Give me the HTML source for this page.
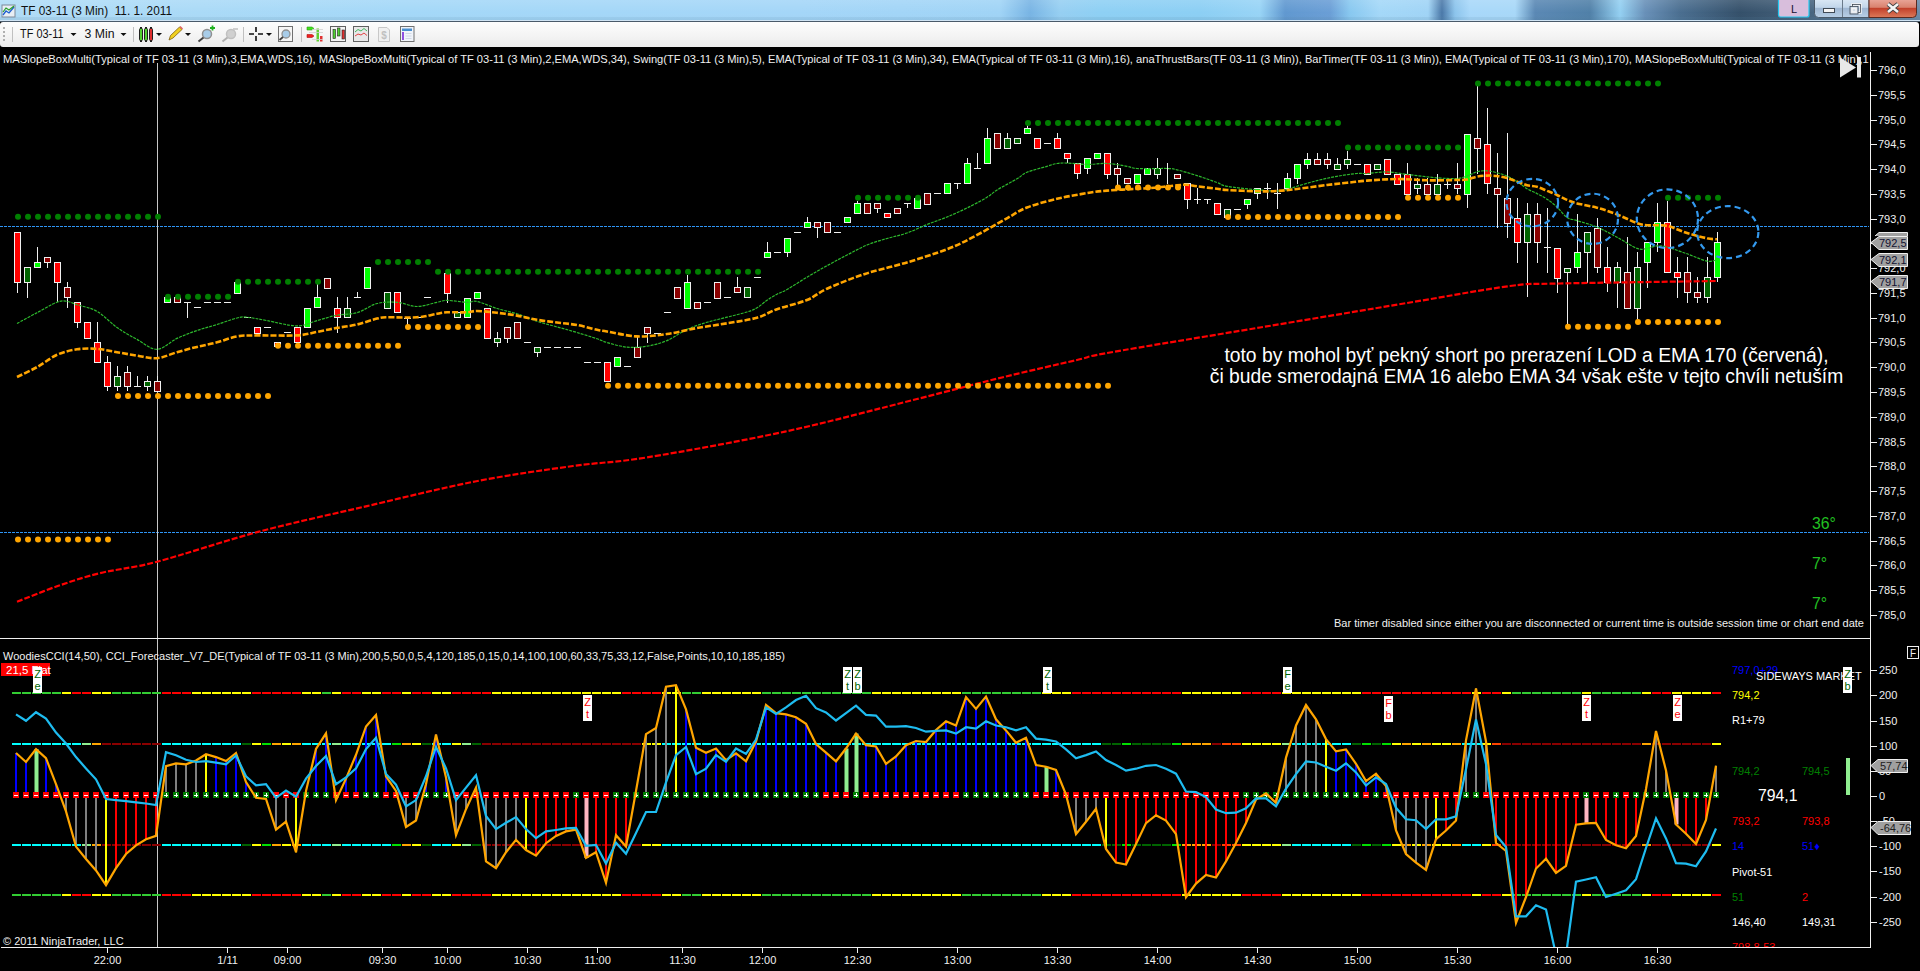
<!DOCTYPE html><html><head><meta charset="utf-8"><style>html,body{margin:0;padding:0;background:#000;width:1920px;height:971px;overflow:hidden}svg{display:block}text{font-family:"Liberation Sans",sans-serif}</style></head><body><svg width="1920" height="971" viewBox="0 0 1920 971"><defs><clipPath id="cp1"><rect x="0" y="47" width="1869" height="591"/></clipPath><clipPath id="cp2"><rect x="0" y="639" width="1869" height="308"/></clipPath><linearGradient id="tb" x1="0" y1="0" x2="1" y2="0"><stop offset="0.0000" stop-color="#b0dcf6"/><stop offset="0.2083" stop-color="#a4d8f8"/><stop offset="0.4167" stop-color="#a4d6f8"/><stop offset="0.5208" stop-color="#a0d4f6"/><stop offset="0.5365" stop-color="#78b4e4"/><stop offset="0.5521" stop-color="#96cff2"/><stop offset="0.5729" stop-color="#8ed0f4"/><stop offset="0.6250" stop-color="#8ccff4"/><stop offset="0.6562" stop-color="#98d4f6"/><stop offset="0.6693" stop-color="#6098d0"/><stop offset="0.6927" stop-color="#6a9ed6"/><stop offset="0.7031" stop-color="#88c8f0"/><stop offset="0.7188" stop-color="#a4d8f8"/><stop offset="0.7438" stop-color="#a0d4f6"/><stop offset="0.7510" stop-color="#4a78a8"/><stop offset="0.7578" stop-color="#8cc4ec"/><stop offset="0.7656" stop-color="#a8d8fa"/><stop offset="0.7891" stop-color="#a8d8f8"/><stop offset="0.7995" stop-color="#5a88b4"/><stop offset="0.8281" stop-color="#5080a8"/><stop offset="0.8438" stop-color="#94d0f2"/><stop offset="0.8568" stop-color="#6890b8"/><stop offset="0.8750" stop-color="#4a6e90"/><stop offset="0.9062" stop-color="#34506a"/><stop offset="0.9271" stop-color="#3e5a74"/><stop offset="1.0000" stop-color="#6a8aa8"/></linearGradient><linearGradient id="tbv" x1="0" y1="0" x2="0" y2="1"><stop offset="0" stop-color="#fff" stop-opacity="0.12"/><stop offset="0.6" stop-color="#fff" stop-opacity="0"/><stop offset="1" stop-color="#000" stop-opacity="0.04"/></linearGradient><linearGradient id="tool" x1="0" y1="0" x2="0" y2="1"><stop offset="0" stop-color="#fdfdfd"/><stop offset="1" stop-color="#ececec"/></linearGradient></defs><rect x="0" y="0" width="1920" height="971" fill="#000"/><rect x="0" y="0" width="1920" height="21" fill="url(#tb)"/><rect x="0" y="0" width="1920" height="21" fill="url(#tbv)"/><rect x="0" y="17" width="1920" height="3" fill="#5a8ab0" fill-opacity="0.12"/><rect x="0" y="20" width="1920" height="1" fill="#d0e4f4"/><rect x="0" y="21" width="1920" height="1" fill="#4a5a6a"/><rect x="0" y="22" width="1919" height="25" rx="3" fill="url(#tool)"/><g clip-path="url(#cp1)"><line x1="0" y1="226.5" x2="1869" y2="226.5" stroke="#2f95f5" stroke-width="1" stroke-dasharray="3,1"/><line x1="0" y1="532.5" x2="1869" y2="532.5" stroke="#2f95f5" stroke-width="1" stroke-dasharray="3,1"/><line x1="157.5" y1="63" x2="157.5" y2="947" stroke="#c8c8c8" stroke-width="1"/><g stroke="#f0f0f0" stroke-width="1"><line x1="17.5" y1="282" x2="17.5" y2="293"/><line x1="27.5" y1="282" x2="27.5" y2="298"/><line x1="37.5" y1="247" x2="37.5" y2="262"/><line x1="47.5" y1="262" x2="47.5" y2="268"/><line x1="57.5" y1="282" x2="57.5" y2="302"/><line x1="67.5" y1="282" x2="67.5" y2="287"/><line x1="67.5" y1="297" x2="67.5" y2="308"/><line x1="77.5" y1="322" x2="77.5" y2="328"/><line x1="97.5" y1="322" x2="97.5" y2="342"/><line x1="107.5" y1="356" x2="107.5" y2="362"/><line x1="107.5" y1="386" x2="107.5" y2="391"/><line x1="117.5" y1="366" x2="117.5" y2="376"/><line x1="117.5" y1="386" x2="117.5" y2="391"/><line x1="127.5" y1="366" x2="127.5" y2="372"/><line x1="127.5" y1="386" x2="127.5" y2="391"/><line x1="137.5" y1="376" x2="137.5" y2="386"/><line x1="134" y1="386.5" x2="141" y2="386.5"/><line x1="147.5" y1="376" x2="147.5" y2="381"/><line x1="147.5" y1="386" x2="147.5" y2="391"/><line x1="157.5" y1="376" x2="157.5" y2="381"/><line x1="187.5" y1="302" x2="187.5" y2="318"/><line x1="184" y1="302.5" x2="191" y2="302.5"/><line x1="194" y1="307.5" x2="201" y2="307.5"/><line x1="204" y1="302.5" x2="211" y2="302.5"/><line x1="214" y1="302.5" x2="221" y2="302.5"/><line x1="224" y1="302.5" x2="231" y2="302.5"/><line x1="244" y1="317.5" x2="251" y2="317.5"/><line x1="264" y1="327.5" x2="271" y2="327.5"/><line x1="284" y1="332.5" x2="291" y2="332.5"/><line x1="317.5" y1="284" x2="317.5" y2="297"/><line x1="337.5" y1="297" x2="337.5" y2="308"/><line x1="337.5" y1="317" x2="337.5" y2="333"/><line x1="347.5" y1="297" x2="347.5" y2="308"/><line x1="357.5" y1="292" x2="357.5" y2="297"/><line x1="354" y1="297.5" x2="361" y2="297.5"/><line x1="407.5" y1="318" x2="407.5" y2="327"/><line x1="404" y1="318.5" x2="411" y2="318.5"/><line x1="414" y1="317.5" x2="421" y2="317.5"/><line x1="424" y1="297.5" x2="431" y2="297.5"/><line x1="447.5" y1="293" x2="447.5" y2="303"/><line x1="497.5" y1="332" x2="497.5" y2="338"/><line x1="497.5" y1="342" x2="497.5" y2="347"/><line x1="507.5" y1="338" x2="507.5" y2="343"/><line x1="524" y1="342.5" x2="531" y2="342.5"/><line x1="537.5" y1="352" x2="537.5" y2="357"/><line x1="544" y1="347.5" x2="551" y2="347.5"/><line x1="554" y1="347.5" x2="561" y2="347.5"/><line x1="564" y1="347.5" x2="571" y2="347.5"/><line x1="574" y1="347.5" x2="581" y2="347.5"/><line x1="584" y1="362.5" x2="591" y2="362.5"/><line x1="594" y1="362.5" x2="601" y2="362.5"/><line x1="624" y1="366.5" x2="631" y2="366.5"/><line x1="637.5" y1="337" x2="637.5" y2="347"/><line x1="647.5" y1="333" x2="647.5" y2="343"/><line x1="654" y1="333.5" x2="661" y2="333.5"/><line x1="664" y1="312.5" x2="671" y2="312.5"/><line x1="687.5" y1="275" x2="687.5" y2="282"/><line x1="704" y1="302.5" x2="711" y2="302.5"/><line x1="724" y1="297.5" x2="731" y2="297.5"/><line x1="737.5" y1="277" x2="737.5" y2="287"/><line x1="754" y1="277.5" x2="761" y2="277.5"/><line x1="767.5" y1="242" x2="767.5" y2="252"/><line x1="774" y1="252.5" x2="781" y2="252.5"/><line x1="787.5" y1="252" x2="787.5" y2="257"/><line x1="794" y1="232.5" x2="801" y2="232.5"/><line x1="807.5" y1="217" x2="807.5" y2="222"/><line x1="817.5" y1="227" x2="817.5" y2="238"/><line x1="834" y1="232.5" x2="841" y2="232.5"/><line x1="857.5" y1="201" x2="857.5" y2="203"/><line x1="877.5" y1="208" x2="877.5" y2="213"/><line x1="907.5" y1="203" x2="907.5" y2="208"/><line x1="904" y1="203.5" x2="911" y2="203.5"/><line x1="934" y1="193.5" x2="941" y2="193.5"/><line x1="957.5" y1="183" x2="957.5" y2="189"/><line x1="954" y1="183.5" x2="961" y2="183.5"/><line x1="967.5" y1="158" x2="967.5" y2="163"/><line x1="977.5" y1="153" x2="977.5" y2="168"/><line x1="974" y1="168.5" x2="981" y2="168.5"/><line x1="987.5" y1="128" x2="987.5" y2="138"/><line x1="1007.5" y1="133" x2="1007.5" y2="138"/><line x1="1027.5" y1="123" x2="1027.5" y2="128"/><line x1="1044" y1="143.5" x2="1051" y2="143.5"/><line x1="1057.5" y1="133" x2="1057.5" y2="138"/><line x1="1067.5" y1="158" x2="1067.5" y2="163"/><line x1="1077.5" y1="173" x2="1077.5" y2="179"/><line x1="1087.5" y1="168" x2="1087.5" y2="174"/><line x1="1107.5" y1="174" x2="1107.5" y2="179"/><line x1="1117.5" y1="163" x2="1117.5" y2="168"/><line x1="1117.5" y1="174" x2="1117.5" y2="185"/><line x1="1157.5" y1="158" x2="1157.5" y2="168"/><line x1="1157.5" y1="174" x2="1157.5" y2="179"/><line x1="1167.5" y1="163" x2="1167.5" y2="168"/><line x1="1167.5" y1="168" x2="1167.5" y2="184"/><line x1="1164" y1="168.5" x2="1171" y2="168.5"/><line x1="1187.5" y1="199" x2="1187.5" y2="209"/><line x1="1197.5" y1="188" x2="1197.5" y2="199"/><line x1="1197.5" y1="199" x2="1197.5" y2="204"/><line x1="1194" y1="199.5" x2="1201" y2="199.5"/><line x1="1207.5" y1="199" x2="1207.5" y2="204"/><line x1="1204" y1="199.5" x2="1211" y2="199.5"/><line x1="1234" y1="209.5" x2="1241" y2="209.5"/><line x1="1247.5" y1="204" x2="1247.5" y2="209"/><line x1="1257.5" y1="193" x2="1257.5" y2="199"/><line x1="1267.5" y1="183" x2="1267.5" y2="188"/><line x1="1267.5" y1="188" x2="1267.5" y2="199"/><line x1="1264" y1="188.5" x2="1271" y2="188.5"/><line x1="1277.5" y1="183" x2="1277.5" y2="193"/><line x1="1277.5" y1="193" x2="1277.5" y2="209"/><line x1="1274" y1="193.5" x2="1281" y2="193.5"/><line x1="1287.5" y1="173" x2="1287.5" y2="178"/><line x1="1297.5" y1="178" x2="1297.5" y2="184"/><line x1="1307.5" y1="153" x2="1307.5" y2="159"/><line x1="1307.5" y1="164" x2="1307.5" y2="169"/><line x1="1317.5" y1="153" x2="1317.5" y2="159"/><line x1="1327.5" y1="153" x2="1327.5" y2="159"/><line x1="1327.5" y1="164" x2="1327.5" y2="169"/><line x1="1337.5" y1="158" x2="1337.5" y2="164"/><line x1="1347.5" y1="151" x2="1347.5" y2="159"/><line x1="1347.5" y1="164" x2="1347.5" y2="169"/><line x1="1354" y1="164.5" x2="1361" y2="164.5"/><line x1="1407.5" y1="163" x2="1407.5" y2="174"/><line x1="1417.5" y1="178" x2="1417.5" y2="184"/><line x1="1417.5" y1="188" x2="1417.5" y2="194"/><line x1="1427.5" y1="178" x2="1427.5" y2="184"/><line x1="1437.5" y1="174" x2="1437.5" y2="184"/><line x1="1447.5" y1="178" x2="1447.5" y2="184"/><line x1="1447.5" y1="184" x2="1447.5" y2="189"/><line x1="1444" y1="184.5" x2="1451" y2="184.5"/><line x1="1457.5" y1="163" x2="1457.5" y2="184"/><line x1="1457.5" y1="188" x2="1457.5" y2="194"/><line x1="1467.5" y1="194" x2="1467.5" y2="208"/><line x1="1477.5" y1="84" x2="1477.5" y2="138"/><line x1="1477.5" y1="148" x2="1477.5" y2="174"/><line x1="1487.5" y1="108" x2="1487.5" y2="144"/><line x1="1487.5" y1="183" x2="1487.5" y2="194"/><line x1="1497.5" y1="153" x2="1497.5" y2="188"/><line x1="1497.5" y1="194" x2="1497.5" y2="228"/><line x1="1507.5" y1="133" x2="1507.5" y2="198"/><line x1="1507.5" y1="223" x2="1507.5" y2="238"/><line x1="1517.5" y1="198" x2="1517.5" y2="218"/><line x1="1517.5" y1="242" x2="1517.5" y2="263"/><line x1="1527.5" y1="203" x2="1527.5" y2="214"/><line x1="1527.5" y1="242" x2="1527.5" y2="297"/><line x1="1537.5" y1="203" x2="1537.5" y2="214"/><line x1="1537.5" y1="242" x2="1537.5" y2="263"/><line x1="1547.5" y1="208" x2="1547.5" y2="247"/><line x1="1547.5" y1="247" x2="1547.5" y2="273"/><line x1="1544" y1="247.5" x2="1551" y2="247.5"/><line x1="1557.5" y1="278" x2="1557.5" y2="293"/><line x1="1567.5" y1="272" x2="1567.5" y2="324"/><line x1="1577.5" y1="214" x2="1577.5" y2="252"/><line x1="1577.5" y1="267" x2="1577.5" y2="273"/><line x1="1587.5" y1="252" x2="1587.5" y2="283"/><line x1="1597.5" y1="218" x2="1597.5" y2="228"/><line x1="1597.5" y1="267" x2="1597.5" y2="273"/><line x1="1607.5" y1="247" x2="1607.5" y2="267"/><line x1="1607.5" y1="282" x2="1607.5" y2="292"/><line x1="1617.5" y1="262" x2="1617.5" y2="267"/><line x1="1617.5" y1="282" x2="1617.5" y2="308"/><line x1="1627.5" y1="237" x2="1627.5" y2="272"/><line x1="1637.5" y1="252" x2="1637.5" y2="267"/><line x1="1637.5" y1="308" x2="1637.5" y2="319"/><line x1="1647.5" y1="262" x2="1647.5" y2="288"/><line x1="1657.5" y1="203" x2="1657.5" y2="222"/><line x1="1657.5" y1="242" x2="1657.5" y2="252"/><line x1="1667.5" y1="201" x2="1667.5" y2="222"/><line x1="1677.5" y1="257" x2="1677.5" y2="272"/><line x1="1677.5" y1="277" x2="1677.5" y2="298"/><line x1="1687.5" y1="257" x2="1687.5" y2="272"/><line x1="1687.5" y1="292" x2="1687.5" y2="303"/><line x1="1697.5" y1="277" x2="1697.5" y2="292"/><line x1="1697.5" y1="297" x2="1697.5" y2="303"/><line x1="1707.5" y1="257" x2="1707.5" y2="277"/><line x1="1707.5" y1="297" x2="1707.5" y2="303"/><line x1="1717.5" y1="232" x2="1717.5" y2="242"/><line x1="1717.5" y1="277" x2="1717.5" y2="282"/></g><g stroke="#f0f0f0" stroke-width="1"><rect x="14.5" y="232.5" width="6" height="50" fill="#ff0000"/><rect x="24.5" y="267.5" width="6" height="15" fill="#006400"/><rect x="34.5" y="262.5" width="6" height="5" fill="#00ff00"/><rect x="44.5" y="257.5" width="6" height="5" fill="#8b0000"/><rect x="54.5" y="262.5" width="6" height="20" fill="#ff0000"/><rect x="64.5" y="287.5" width="6" height="10" fill="#8b0000"/><rect x="74.5" y="302.5" width="6" height="20" fill="#ff0000"/><rect x="84.5" y="322.5" width="6" height="16" fill="#ff0000"/><rect x="94.5" y="342.5" width="6" height="20" fill="#ff0000"/><rect x="104.5" y="362.5" width="6" height="24" fill="#ff0000"/><rect x="114.5" y="376.5" width="6" height="10" fill="#006400"/><rect x="124.5" y="372.5" width="6" height="14" fill="#8b0000"/><rect x="144.5" y="381.5" width="6" height="5" fill="#006400"/><rect x="154.5" y="381.5" width="6" height="10" fill="#8b0000"/><rect x="164.5" y="297.5" width="6" height="5" fill="#00ff00"/><rect x="174.5" y="297.5" width="6" height="5" fill="#8b0000"/><rect x="234.5" y="282.5" width="6" height="11" fill="#00ff00"/><rect x="254.5" y="327.5" width="6" height="6" fill="#ff0000"/><rect x="274.5" y="342.5" width="6" height="4" fill="#ff0000"/><rect x="294.5" y="327.5" width="6" height="15" fill="#ff0000"/><rect x="304.5" y="308.5" width="6" height="19" fill="#00ff00"/><rect x="314.5" y="297.5" width="6" height="10" fill="#00ff00"/><rect x="324.5" y="278.5" width="6" height="10" fill="#8b0000"/><rect x="334.5" y="308.5" width="6" height="9" fill="#ff0000"/><rect x="344.5" y="308.5" width="6" height="9" fill="#006400"/><rect x="364.5" y="267.5" width="6" height="21" fill="#00ff00"/><rect x="384.5" y="292.5" width="6" height="16" fill="#006400"/><rect x="394.5" y="292.5" width="6" height="20" fill="#ff0000"/><rect x="444.5" y="273.5" width="6" height="20" fill="#ff0000"/><rect x="454.5" y="312.5" width="6" height="5" fill="#006400"/><rect x="464.5" y="298.5" width="6" height="19" fill="#00ff00"/><rect x="474.5" y="292.5" width="6" height="6" fill="#00ff00"/><rect x="484.5" y="308.5" width="6" height="30" fill="#ff0000"/><rect x="494.5" y="338.5" width="6" height="4" fill="#006400"/><rect x="504.5" y="327.5" width="6" height="11" fill="#8b0000"/><rect x="514.5" y="322.5" width="6" height="16" fill="#8b0000"/><rect x="534.5" y="347.5" width="6" height="5" fill="#006400"/><rect x="604.5" y="362.5" width="6" height="19" fill="#ff0000"/><rect x="614.5" y="357.5" width="6" height="9" fill="#00ff00"/><rect x="634.5" y="347.5" width="6" height="10" fill="#8b0000"/><rect x="644.5" y="327.5" width="6" height="6" fill="#8b0000"/><rect x="674.5" y="287.5" width="6" height="11" fill="#8b0000"/><rect x="684.5" y="282.5" width="6" height="26" fill="#00ff00"/><rect x="694.5" y="302.5" width="6" height="6" fill="#8b0000"/><rect x="714.5" y="282.5" width="6" height="16" fill="#8b0000"/><rect x="734.5" y="287.5" width="6" height="5" fill="#8b0000"/><rect x="744.5" y="287.5" width="6" height="10" fill="#006400"/><rect x="764.5" y="252.5" width="6" height="5" fill="#00ff00"/><rect x="784.5" y="238.5" width="6" height="14" fill="#00ff00"/><rect x="804.5" y="222.5" width="6" height="5" fill="#00ff00"/><rect x="814.5" y="222.5" width="6" height="5" fill="#8b0000"/><rect x="824.5" y="222.5" width="6" height="10" fill="#8b0000"/><rect x="844.5" y="217.5" width="6" height="5" fill="#00ff00"/><rect x="854.5" y="203.5" width="6" height="10" fill="#00ff00"/><rect x="864.5" y="203.5" width="6" height="10" fill="#8b0000"/><rect x="874.5" y="203.5" width="6" height="5" fill="#8b0000"/><rect x="884.5" y="213.5" width="6" height="4" fill="#ff0000"/><rect x="894.5" y="208.5" width="6" height="5" fill="#8b0000"/><rect x="914.5" y="198.5" width="6" height="10" fill="#00ff00"/><rect x="924.5" y="193.5" width="6" height="11" fill="#8b0000"/><rect x="944.5" y="183.5" width="6" height="10" fill="#00ff00"/><rect x="964.5" y="163.5" width="6" height="20" fill="#00ff00"/><rect x="984.5" y="138.5" width="6" height="25" fill="#00ff00"/><rect x="994.5" y="133.5" width="6" height="15" fill="#8b0000"/><rect x="1004.5" y="138.5" width="6" height="10" fill="#006400"/><rect x="1014.5" y="138.5" width="6" height="5" fill="#006400"/><rect x="1024.5" y="128.5" width="6" height="5" fill="#00ff00"/><rect x="1034.5" y="138.5" width="6" height="10" fill="#ff0000"/><rect x="1054.5" y="138.5" width="6" height="10" fill="#ff0000"/><rect x="1064.5" y="153.5" width="6" height="5" fill="#ff0000"/><rect x="1074.5" y="163.5" width="6" height="10" fill="#ff0000"/><rect x="1084.5" y="158.5" width="6" height="10" fill="#00ff00"/><rect x="1094.5" y="153.5" width="6" height="5" fill="#00ff00"/><rect x="1104.5" y="153.5" width="6" height="21" fill="#ff0000"/><rect x="1114.5" y="168.5" width="6" height="6" fill="#8b0000"/><rect x="1124.5" y="178.5" width="6" height="5" fill="#8b0000"/><rect x="1134.5" y="174.5" width="6" height="9" fill="#00ff00"/><rect x="1144.5" y="168.5" width="6" height="6" fill="#00ff00"/><rect x="1154.5" y="168.5" width="6" height="6" fill="#006400"/><rect x="1174.5" y="174.5" width="6" height="4" fill="#8b0000"/><rect x="1184.5" y="183.5" width="6" height="16" fill="#ff0000"/><rect x="1214.5" y="203.5" width="6" height="11" fill="#ff0000"/><rect x="1224.5" y="209.5" width="6" height="8" fill="#006400"/><rect x="1244.5" y="199.5" width="6" height="5" fill="#00ff00"/><rect x="1254.5" y="188.5" width="6" height="5" fill="#00ff00"/><rect x="1284.5" y="178.5" width="6" height="10" fill="#00ff00"/><rect x="1294.5" y="164.5" width="6" height="14" fill="#00ff00"/><rect x="1304.5" y="159.5" width="6" height="5" fill="#00ff00"/><rect x="1314.5" y="159.5" width="6" height="5" fill="#8b0000"/><rect x="1324.5" y="159.5" width="6" height="5" fill="#8b0000"/><rect x="1334.5" y="164.5" width="6" height="5" fill="#006400"/><rect x="1344.5" y="159.5" width="6" height="5" fill="#006400"/><rect x="1364.5" y="164.5" width="6" height="10" fill="#ff0000"/><rect x="1374.5" y="164.5" width="6" height="5" fill="#006400"/><rect x="1384.5" y="159.5" width="6" height="15" fill="#ff0000"/><rect x="1394.5" y="174.5" width="6" height="10" fill="#ff0000"/><rect x="1404.5" y="174.5" width="6" height="20" fill="#ff0000"/><rect x="1414.5" y="184.5" width="6" height="4" fill="#006400"/><rect x="1424.5" y="184.5" width="6" height="10" fill="#8b0000"/><rect x="1434.5" y="184.5" width="6" height="10" fill="#006400"/><rect x="1454.5" y="184.5" width="6" height="4" fill="#8b0000"/><rect x="1464.5" y="134.5" width="6" height="60" fill="#00ff00"/><rect x="1474.5" y="138.5" width="6" height="10" fill="#8b0000"/><rect x="1484.5" y="144.5" width="6" height="39" fill="#ff0000"/><rect x="1494.5" y="188.5" width="6" height="6" fill="#8b0000"/><rect x="1504.5" y="198.5" width="6" height="25" fill="#8b0000"/><rect x="1514.5" y="218.5" width="6" height="24" fill="#ff0000"/><rect x="1524.5" y="214.5" width="6" height="28" fill="#006400"/><rect x="1534.5" y="214.5" width="6" height="28" fill="#8b0000"/><rect x="1554.5" y="248.5" width="6" height="30" fill="#ff0000"/><rect x="1564.5" y="268.5" width="6" height="4" fill="#006400"/><rect x="1574.5" y="252.5" width="6" height="15" fill="#00ff00"/><rect x="1584.5" y="232.5" width="6" height="20" fill="#006400"/><rect x="1594.5" y="228.5" width="6" height="39" fill="#8b0000"/><rect x="1604.5" y="267.5" width="6" height="15" fill="#ff0000"/><rect x="1614.5" y="267.5" width="6" height="15" fill="#006400"/><rect x="1624.5" y="272.5" width="6" height="36" fill="#8b0000"/><rect x="1634.5" y="267.5" width="6" height="41" fill="#006400"/><rect x="1644.5" y="242.5" width="6" height="20" fill="#00ff00"/><rect x="1654.5" y="222.5" width="6" height="20" fill="#00ff00"/><rect x="1664.5" y="222.5" width="6" height="50" fill="#ff0000"/><rect x="1674.5" y="272.5" width="6" height="5" fill="#ff0000"/><rect x="1684.5" y="272.5" width="6" height="20" fill="#8b0000"/><rect x="1694.5" y="292.5" width="6" height="5" fill="#8b0000"/><rect x="1704.5" y="277.5" width="6" height="20" fill="#006400"/><rect x="1714.5" y="242.5" width="6" height="35" fill="#00ff00"/></g><path d="M17 601.8C23.7 599.2 43.2 591.1 57 586.3C70.8 581.5 83.3 577.2 100 573.1C116.7 569 130.7 568.6 157 561.7C183.3 554.8 223 541.2 258 531.9C293 522.6 330.8 514.5 367 506.1C403.2 497.7 440.7 488.2 475 481.5C509.3 474.8 544.3 470 573 466C601.7 462 611.7 463.1 647 457.4C682.3 451.7 740 441.3 785 431.6C830 421.9 880.7 408.1 917 399C953.3 389.9 976.3 383.7 1003 377.2C1029.7 370.7 1059.2 364.1 1077 360C1094.8 355.9 1079.5 357.9 1110 352.5C1140.5 347.1 1210 335.8 1260 327.5C1310 319.2 1368.3 309.4 1410 302.5C1451.7 295.6 1485 289.2 1510 286C1535 282.8 1525.5 284.3 1560 283.5C1594.5 282.7 1690.8 281.4 1717 281" fill="none" stroke="#ff0000" stroke-width="2.2" stroke-dasharray="6,2"/><path d="M17 323.5C20.3 321.7 30.3 316.2 37 312.7C43.7 309.1 52 304.1 57 302.2C62 300.3 63.7 301 67 301.4C70.3 301.8 72 303 77 304.7C82 306.4 90.3 307.5 97 311.3C103.7 315.1 110.3 322.8 117 327.5C123.7 332.2 130.3 335.8 137 339.4C143.7 343 150.3 349.5 157 349.3C163.7 349.1 170.3 341.5 177 338.4C183.7 335.3 190.3 332.8 197 330.5C203.7 328.2 210.3 326.6 217 324.5C223.7 322.4 232 319.2 237 318C242 316.8 242 316.8 247 317.2C252 317.6 258.7 319.2 267 320.6C275.3 322.1 288.7 325.9 297 325.9C305.3 325.9 310.3 322.4 317 320.6C323.7 318.8 330.3 316.5 337 315.2C343.7 313.9 350.3 314.6 357 312.7C363.7 310.8 370.3 305.2 377 303.5C383.7 301.8 390.3 301.8 397 302.3C403.7 302.8 410.3 306.5 417 306.5C423.7 306.5 432 303.3 437 302.3C442 301.3 442 300.4 447 300.4C452 300.4 462 302.1 467 302.3C472 302.5 472 300.5 477 301.5C482 302.5 490.3 306.4 497 308.5C503.7 310.6 510.3 311.7 517 313.8C523.7 315.9 530.3 319.1 537 321.3C543.7 323.5 550.3 325 557 326.9C563.7 328.8 570.3 330.5 577 332.5C583.7 334.5 592 337.1 597 338.8C602 340.5 602 341.1 607 342.5C612 343.9 620.3 346.6 627 347.2C633.7 347.8 640.3 347.3 647 346.2C653.7 345.1 660.3 343.4 667 340.6C673.7 337.8 680.3 332.4 687 329.4C693.7 326.3 700.3 324.3 707 322.3C713.7 320.3 720.3 318.9 727 317.2C733.7 315.5 742 313.6 747 312C752 310.4 753.7 309.8 757 307.8C760.3 305.9 763.7 302.6 767 300.3C770.3 298 773.7 296 777 294.2C780.3 292.4 782 292.3 787 289.5C792 286.7 800.3 281.2 807 277.2C813.7 273.2 820.3 269.4 827 265.7C833.7 262 840.3 258.4 847 255C853.7 251.6 860.3 247.8 867 245C873.7 242.2 880.3 240.5 887 238.5C893.7 236.5 900.3 235.3 907 233C913.7 230.7 920.3 227.2 927 224.5C933.7 221.8 940.3 219.8 947 217C953.7 214.2 960.3 211.3 967 208C973.7 204.7 982 200.3 987 197.3C992 194.3 992 193.1 997 190C1002 186.9 1012 181.8 1017 178.8C1022 175.9 1022 174.4 1027 172.3C1032 170.2 1042 167.8 1047 166.3C1052 164.8 1053.7 164 1057 163.5C1060.3 163 1062 162.9 1067 163.1C1072 163.2 1080.3 164.3 1087 164.4C1093.7 164.5 1100.3 163.2 1107 163.5C1113.7 163.8 1122 165.5 1127 166.3C1132 167.1 1130.3 168.1 1137 168.5C1143.7 168.9 1160.3 168.3 1167 168.5C1173.7 168.7 1172 168.6 1177 169.8C1182 171 1190.3 173.5 1197 175.6C1203.7 177.7 1212 180.7 1217 182.5C1222 184.3 1220.3 185.1 1227 186.3C1233.7 187.5 1248.7 189 1257 189.8C1265.3 190.6 1272 191.1 1277 191C1282 190.9 1283.7 190.2 1287 189.4C1290.3 188.6 1292 187.8 1297 186.3C1302 184.8 1310.3 182.3 1317 180.6C1323.7 178.9 1330.3 177.5 1337 176.3C1343.7 175.1 1352 174 1357 173.5C1362 173 1362 173.8 1367 173.5C1372 173.2 1380.3 171.8 1387 171.9C1393.7 172.1 1398.7 173.4 1407 174.4C1415.3 175.4 1428.7 177.1 1437 177.8C1445.3 178.5 1452 178.8 1457 178.5C1462 178.2 1463.7 177.1 1467 176C1470.3 174.9 1473.7 172.7 1477 171.8C1480.3 170.9 1483.7 170.6 1487 170.8C1490.3 171 1493.7 171.9 1497 172.8C1500.3 173.7 1503.7 174.5 1507 176C1510.3 177.5 1513.7 179.5 1517 181.6C1520.3 183.7 1523.7 186.7 1527 188.7C1530.3 190.7 1533.7 191.8 1537 193.6C1540.3 195.3 1543.7 197 1547 199.2C1550.3 201.4 1553.7 203.9 1557 207C1560.3 210.1 1563.7 215.2 1567 217.5C1570.3 219.8 1572 219 1577 220.6C1582 222.2 1590.3 224.3 1597 227.1C1603.7 229.9 1610.3 233.6 1617 237.2C1623.7 240.8 1632 246.5 1637 248.4C1642 250.3 1643.7 248.8 1647 248.4C1650.3 248 1653.7 246.1 1657 245.9C1660.3 245.7 1662 245.7 1667 247C1672 248.3 1680.3 251.5 1687 253.8C1693.7 256.2 1702 260.1 1707 261.1C1712 262.1 1715.3 259.9 1717 259.7" fill="none" stroke="#2db82d" stroke-width="1.2" stroke-dasharray="3,1"/><path d="M17 377C20.3 375.4 30.3 370.8 37 367.1C43.7 363.4 50.3 357.8 57 354.8C63.7 351.8 70.3 350.3 77 349.3C83.7 348.3 90.3 348.4 97 348.9C103.7 349.4 110.3 351.1 117 352.2C123.7 353.3 130.3 354.6 137 355.6C143.7 356.6 150.3 358.8 157 358.2C163.7 357.6 170.3 354.1 177 352.2C183.7 350.3 190.3 348.5 197 346.9C203.7 345.2 210.3 344.1 217 342.3C223.7 340.6 230.3 337.5 237 336.4C243.7 335.2 247 335.6 257 335.4C267 335.2 287 336 297 335.4C307 334.8 310.3 333.1 317 331.9C323.7 330.6 330.3 329.1 337 327.9C343.7 326.7 350.3 326.1 357 324.5C363.7 322.9 372 319.8 377 318.6C382 317.4 380.3 317.5 387 317.3C393.7 317.1 408.7 317.9 417 317.3C425.3 316.7 432 314.6 437 313.8C442 313 442 312.6 447 312.3C452 312.1 462 312.5 467 312.3C472 312.1 472 310.9 477 311C482 311.1 490.3 312 497 312.8C503.7 313.6 510.3 314.4 517 315.6C523.7 316.8 530.3 318.7 537 319.8C543.7 320.9 550.3 321.6 557 322.5C563.7 323.4 570.3 323.8 577 325C583.7 326.2 592 328.7 597 329.8C602 330.9 600.3 330.4 607 331.5C613.7 332.6 627 336 637 336.4C647 336.8 657 335.4 667 334C677 332.6 687 329.8 697 328C707 326.2 717 325 727 323.3C737 321.6 748.7 320.1 757 317.7C765.3 315.3 768.7 312.1 777 309.2C785.3 306.2 798.7 303.4 807 300C815.3 296.6 817.3 293.1 827 288.7C836.7 284.3 851.7 278.3 865 273.9C878.3 269.5 893.3 266.5 907 262.4C920.7 258.3 936.2 253.3 947 249.2C957.8 245.1 962.3 242.7 972 237.7C981.7 232.7 995.8 224.4 1005 219.4C1014.2 214.4 1018.3 210.9 1027 207.5C1035.7 204.1 1047 201.2 1057 198.8C1067 196.4 1078.7 194.5 1087 193.1C1095.3 191.7 1098.7 191.3 1107 190.6C1115.3 189.9 1128.7 189.3 1137 188.8C1145.3 188.3 1150.3 188.1 1157 187.5C1163.7 186.9 1172 185.8 1177 185.3C1182 184.9 1183.7 184.6 1187 184.8C1190.3 185 1192 185.6 1197 186.3C1202 187 1212 188.2 1217 188.8C1222 189.4 1220.3 189.6 1227 190C1233.7 190.4 1248.7 191.1 1257 191.3C1265.3 191.5 1270.3 191.4 1277 191C1283.7 190.6 1288.7 190 1297 189C1305.3 188 1318.7 186 1327 185C1335.3 184 1340.3 183.5 1347 182.8C1353.7 182.1 1358.7 181.2 1367 180.6C1375.3 180 1387 179.1 1397 179C1407 178.9 1417 180.1 1427 180.3C1437 180.5 1450.3 180.1 1457 180C1463.7 179.9 1463.7 180.1 1467 179.5C1470.3 178.9 1473.7 177.3 1477 176.7C1480.3 176 1483.7 175.7 1487 175.6C1490.3 175.5 1493.7 175.6 1497 176C1500.3 176.4 1503.7 177.2 1507 178.1C1510.3 179 1513.7 180.4 1517 181.6C1520.3 182.8 1523.7 184.3 1527 185.2C1530.3 186.1 1533.7 185.9 1537 186.8C1540.3 187.7 1543.7 189.4 1547 190.8C1550.3 192.2 1553.7 193.5 1557 195C1560.3 196.5 1563.7 198.5 1567 199.9C1570.3 201.3 1572 202.1 1577 203.4C1582 204.7 1590.3 205.9 1597 207.7C1603.7 209.5 1610.3 211.8 1617 214.4C1623.7 217 1632 221.3 1637 223.1C1642 224.9 1642 224.7 1647 225.2C1652 225.7 1660.3 224.6 1667 225.9C1673.7 227.2 1680.3 230.9 1687 233C1693.7 235.1 1702 237.2 1707 238.3C1712 239.4 1715.3 239.1 1717 239.3" fill="none" stroke="#ffa500" stroke-width="2.6" stroke-dasharray="6,2"/><g fill="#008000"><circle cx="18" cy="216.8" r="3"/><circle cx="28" cy="216.8" r="3"/><circle cx="38" cy="216.8" r="3"/><circle cx="48" cy="216.8" r="3"/><circle cx="58" cy="216.8" r="3"/><circle cx="68" cy="216.8" r="3"/><circle cx="78" cy="216.8" r="3"/><circle cx="88" cy="216.8" r="3"/><circle cx="98" cy="216.8" r="3"/><circle cx="108" cy="216.8" r="3"/><circle cx="118" cy="216.8" r="3"/><circle cx="128" cy="216.8" r="3"/><circle cx="138" cy="216.8" r="3"/><circle cx="148" cy="216.8" r="3"/><circle cx="158" cy="216.8" r="3"/><circle cx="168" cy="296.8" r="3"/><circle cx="178" cy="296.8" r="3"/><circle cx="188" cy="296.8" r="3"/><circle cx="198" cy="296.8" r="3"/><circle cx="208" cy="296.8" r="3"/><circle cx="218" cy="296.8" r="3"/><circle cx="228" cy="296.8" r="3"/><circle cx="238" cy="281.7" r="3"/><circle cx="248" cy="281.7" r="3"/><circle cx="258" cy="281.7" r="3"/><circle cx="268" cy="281.7" r="3"/><circle cx="278" cy="281.7" r="3"/><circle cx="288" cy="281.7" r="3"/><circle cx="298" cy="281.7" r="3"/><circle cx="308" cy="281.7" r="3"/><circle cx="318" cy="281.7" r="3"/><circle cx="378" cy="261.9" r="3"/><circle cx="388" cy="261.9" r="3"/><circle cx="398" cy="261.9" r="3"/><circle cx="408" cy="261.9" r="3"/><circle cx="418" cy="261.9" r="3"/><circle cx="428" cy="261.9" r="3"/><circle cx="438" cy="271.8" r="3"/><circle cx="448" cy="271.8" r="3"/><circle cx="458" cy="271.8" r="3"/><circle cx="468" cy="271.8" r="3"/><circle cx="478" cy="271.8" r="3"/><circle cx="488" cy="271.8" r="3"/><circle cx="498" cy="271.8" r="3"/><circle cx="508" cy="271.8" r="3"/><circle cx="518" cy="271.8" r="3"/><circle cx="528" cy="271.8" r="3"/><circle cx="538" cy="271.8" r="3"/><circle cx="548" cy="271.8" r="3"/><circle cx="558" cy="271.8" r="3"/><circle cx="568" cy="271.8" r="3"/><circle cx="578" cy="271.8" r="3"/><circle cx="588" cy="271.8" r="3"/><circle cx="598" cy="271.8" r="3"/><circle cx="608" cy="271.8" r="3"/><circle cx="618" cy="271.8" r="3"/><circle cx="628" cy="271.8" r="3"/><circle cx="638" cy="271.8" r="3"/><circle cx="648" cy="271.8" r="3"/><circle cx="658" cy="271.8" r="3"/><circle cx="668" cy="271.8" r="3"/><circle cx="678" cy="271.8" r="3"/><circle cx="688" cy="271.8" r="3"/><circle cx="698" cy="271.8" r="3"/><circle cx="708" cy="271.8" r="3"/><circle cx="718" cy="271.8" r="3"/><circle cx="728" cy="271.8" r="3"/><circle cx="738" cy="271.8" r="3"/><circle cx="748" cy="271.8" r="3"/><circle cx="758" cy="271.8" r="3"/><circle cx="858" cy="197.7" r="3"/><circle cx="868" cy="197.7" r="3"/><circle cx="878" cy="197.7" r="3"/><circle cx="888" cy="197.7" r="3"/><circle cx="898" cy="197.7" r="3"/><circle cx="908" cy="197.7" r="3"/><circle cx="918" cy="197.7" r="3"/><circle cx="1028" cy="122.9" r="3"/><circle cx="1038" cy="122.9" r="3"/><circle cx="1048" cy="122.9" r="3"/><circle cx="1058" cy="122.9" r="3"/><circle cx="1068" cy="122.9" r="3"/><circle cx="1078" cy="122.9" r="3"/><circle cx="1088" cy="122.9" r="3"/><circle cx="1098" cy="122.9" r="3"/><circle cx="1108" cy="122.9" r="3"/><circle cx="1118" cy="122.9" r="3"/><circle cx="1128" cy="122.9" r="3"/><circle cx="1138" cy="122.9" r="3"/><circle cx="1148" cy="122.9" r="3"/><circle cx="1158" cy="122.9" r="3"/><circle cx="1168" cy="122.9" r="3"/><circle cx="1178" cy="122.9" r="3"/><circle cx="1188" cy="122.9" r="3"/><circle cx="1198" cy="122.9" r="3"/><circle cx="1208" cy="122.9" r="3"/><circle cx="1218" cy="122.9" r="3"/><circle cx="1228" cy="122.9" r="3"/><circle cx="1238" cy="122.9" r="3"/><circle cx="1248" cy="122.9" r="3"/><circle cx="1258" cy="122.9" r="3"/><circle cx="1268" cy="122.9" r="3"/><circle cx="1278" cy="122.9" r="3"/><circle cx="1288" cy="122.9" r="3"/><circle cx="1298" cy="122.9" r="3"/><circle cx="1308" cy="122.9" r="3"/><circle cx="1318" cy="122.9" r="3"/><circle cx="1328" cy="122.9" r="3"/><circle cx="1338" cy="122.9" r="3"/><circle cx="1348" cy="147.5" r="3"/><circle cx="1358" cy="147.5" r="3"/><circle cx="1368" cy="147.5" r="3"/><circle cx="1378" cy="147.5" r="3"/><circle cx="1388" cy="147.5" r="3"/><circle cx="1398" cy="147.5" r="3"/><circle cx="1408" cy="147.5" r="3"/><circle cx="1418" cy="147.5" r="3"/><circle cx="1428" cy="147.5" r="3"/><circle cx="1438" cy="147.5" r="3"/><circle cx="1448" cy="147.5" r="3"/><circle cx="1458" cy="147.5" r="3"/><circle cx="1478" cy="83.6" r="3"/><circle cx="1488" cy="83.6" r="3"/><circle cx="1498" cy="83.6" r="3"/><circle cx="1508" cy="83.6" r="3"/><circle cx="1518" cy="83.6" r="3"/><circle cx="1528" cy="83.6" r="3"/><circle cx="1538" cy="83.6" r="3"/><circle cx="1548" cy="83.6" r="3"/><circle cx="1558" cy="83.6" r="3"/><circle cx="1568" cy="83.6" r="3"/><circle cx="1578" cy="83.6" r="3"/><circle cx="1588" cy="83.6" r="3"/><circle cx="1598" cy="83.6" r="3"/><circle cx="1608" cy="83.6" r="3"/><circle cx="1618" cy="83.6" r="3"/><circle cx="1628" cy="83.6" r="3"/><circle cx="1638" cy="83.6" r="3"/><circle cx="1648" cy="83.6" r="3"/><circle cx="1658" cy="83.6" r="3"/><circle cx="1668" cy="197.7" r="3"/><circle cx="1678" cy="197.7" r="3"/><circle cx="1688" cy="197.7" r="3"/><circle cx="1698" cy="197.7" r="3"/><circle cx="1708" cy="197.7" r="3"/><circle cx="1718" cy="197.7" r="3"/></g><g fill="#ffa500"><circle cx="118" cy="395.9" r="3"/><circle cx="128" cy="395.9" r="3"/><circle cx="138" cy="395.9" r="3"/><circle cx="148" cy="395.9" r="3"/><circle cx="158" cy="395.9" r="3"/><circle cx="168" cy="395.9" r="3"/><circle cx="178" cy="395.9" r="3"/><circle cx="188" cy="395.9" r="3"/><circle cx="198" cy="395.9" r="3"/><circle cx="208" cy="395.9" r="3"/><circle cx="218" cy="395.9" r="3"/><circle cx="228" cy="395.9" r="3"/><circle cx="238" cy="395.9" r="3"/><circle cx="248" cy="395.9" r="3"/><circle cx="258" cy="395.9" r="3"/><circle cx="268" cy="395.9" r="3"/><circle cx="278" cy="345.8" r="3"/><circle cx="288" cy="345.8" r="3"/><circle cx="298" cy="345.8" r="3"/><circle cx="308" cy="345.8" r="3"/><circle cx="318" cy="345.8" r="3"/><circle cx="328" cy="345.8" r="3"/><circle cx="338" cy="345.8" r="3"/><circle cx="348" cy="345.8" r="3"/><circle cx="358" cy="345.8" r="3"/><circle cx="368" cy="345.8" r="3"/><circle cx="378" cy="345.8" r="3"/><circle cx="388" cy="345.8" r="3"/><circle cx="398" cy="345.8" r="3"/><circle cx="408" cy="327" r="3"/><circle cx="418" cy="327" r="3"/><circle cx="428" cy="327" r="3"/><circle cx="438" cy="327" r="3"/><circle cx="448" cy="327" r="3"/><circle cx="458" cy="327" r="3"/><circle cx="468" cy="327" r="3"/><circle cx="478" cy="327" r="3"/><circle cx="608" cy="385.8" r="3"/><circle cx="618" cy="385.8" r="3"/><circle cx="628" cy="385.8" r="3"/><circle cx="638" cy="385.8" r="3"/><circle cx="648" cy="385.8" r="3"/><circle cx="658" cy="385.8" r="3"/><circle cx="668" cy="385.8" r="3"/><circle cx="678" cy="385.8" r="3"/><circle cx="688" cy="385.8" r="3"/><circle cx="698" cy="385.8" r="3"/><circle cx="708" cy="385.8" r="3"/><circle cx="718" cy="385.8" r="3"/><circle cx="728" cy="385.8" r="3"/><circle cx="738" cy="385.8" r="3"/><circle cx="748" cy="385.8" r="3"/><circle cx="758" cy="385.8" r="3"/><circle cx="768" cy="385.8" r="3"/><circle cx="778" cy="385.8" r="3"/><circle cx="788" cy="385.8" r="3"/><circle cx="798" cy="385.8" r="3"/><circle cx="808" cy="385.8" r="3"/><circle cx="818" cy="385.8" r="3"/><circle cx="828" cy="385.8" r="3"/><circle cx="838" cy="385.8" r="3"/><circle cx="848" cy="385.8" r="3"/><circle cx="858" cy="385.8" r="3"/><circle cx="868" cy="385.8" r="3"/><circle cx="878" cy="385.8" r="3"/><circle cx="888" cy="385.8" r="3"/><circle cx="898" cy="385.8" r="3"/><circle cx="908" cy="385.8" r="3"/><circle cx="918" cy="385.8" r="3"/><circle cx="928" cy="385.8" r="3"/><circle cx="938" cy="385.8" r="3"/><circle cx="948" cy="385.8" r="3"/><circle cx="958" cy="385.8" r="3"/><circle cx="968" cy="385.8" r="3"/><circle cx="978" cy="385.8" r="3"/><circle cx="988" cy="385.8" r="3"/><circle cx="998" cy="385.8" r="3"/><circle cx="1008" cy="385.8" r="3"/><circle cx="1018" cy="385.8" r="3"/><circle cx="1028" cy="385.8" r="3"/><circle cx="1038" cy="385.8" r="3"/><circle cx="1048" cy="385.8" r="3"/><circle cx="1058" cy="385.8" r="3"/><circle cx="1068" cy="385.8" r="3"/><circle cx="1078" cy="385.8" r="3"/><circle cx="1088" cy="385.8" r="3"/><circle cx="1098" cy="385.8" r="3"/><circle cx="1108" cy="385.8" r="3"/><circle cx="1118" cy="187.5" r="3"/><circle cx="1128" cy="187.5" r="3"/><circle cx="1138" cy="187.5" r="3"/><circle cx="1148" cy="187.5" r="3"/><circle cx="1158" cy="187.5" r="3"/><circle cx="1168" cy="187.5" r="3"/><circle cx="1178" cy="187.5" r="3"/><circle cx="1228" cy="216.9" r="3"/><circle cx="1238" cy="216.9" r="3"/><circle cx="1248" cy="216.9" r="3"/><circle cx="1258" cy="216.9" r="3"/><circle cx="1268" cy="216.9" r="3"/><circle cx="1278" cy="216.9" r="3"/><circle cx="1288" cy="216.9" r="3"/><circle cx="1298" cy="216.9" r="3"/><circle cx="1308" cy="216.9" r="3"/><circle cx="1318" cy="216.9" r="3"/><circle cx="1328" cy="216.9" r="3"/><circle cx="1338" cy="216.9" r="3"/><circle cx="1348" cy="216.9" r="3"/><circle cx="1358" cy="216.9" r="3"/><circle cx="1368" cy="216.9" r="3"/><circle cx="1378" cy="216.9" r="3"/><circle cx="1388" cy="216.9" r="3"/><circle cx="1398" cy="216.9" r="3"/><circle cx="1408" cy="197.8" r="3"/><circle cx="1418" cy="197.8" r="3"/><circle cx="1428" cy="197.8" r="3"/><circle cx="1438" cy="197.8" r="3"/><circle cx="1448" cy="197.8" r="3"/><circle cx="1458" cy="197.8" r="3"/><circle cx="1568" cy="326.7" r="3"/><circle cx="1578" cy="326.7" r="3"/><circle cx="1588" cy="326.7" r="3"/><circle cx="1598" cy="326.7" r="3"/><circle cx="1608" cy="326.7" r="3"/><circle cx="1618" cy="326.7" r="3"/><circle cx="1628" cy="326.7" r="3"/><circle cx="1638" cy="322" r="3"/><circle cx="1648" cy="322" r="3"/><circle cx="1658" cy="322" r="3"/><circle cx="1668" cy="322" r="3"/><circle cx="1678" cy="322" r="3"/><circle cx="1688" cy="322" r="3"/><circle cx="1698" cy="322" r="3"/><circle cx="1708" cy="322" r="3"/><circle cx="1718" cy="322" r="3"/><circle cx="18" cy="539.5" r="3"/><circle cx="28" cy="539.5" r="3"/><circle cx="38" cy="539.5" r="3"/><circle cx="48" cy="539.5" r="3"/><circle cx="58" cy="539.5" r="3"/><circle cx="68" cy="539.5" r="3"/><circle cx="78" cy="539.5" r="3"/><circle cx="88" cy="539.5" r="3"/><circle cx="98" cy="539.5" r="3"/><circle cx="108" cy="539.5" r="3"/></g><ellipse cx="1532.3" cy="202.6" rx="25.8" ry="23.8" fill="none" stroke="#3399ee" stroke-width="2.2" stroke-dasharray="6,4"/><ellipse cx="1592.6" cy="218.8" rx="25.4" ry="25.1" fill="none" stroke="#3399ee" stroke-width="2.2" stroke-dasharray="6,4"/><ellipse cx="1667.4" cy="218.7" rx="30.6" ry="29.3" fill="none" stroke="#3399ee" stroke-width="2.2" stroke-dasharray="6,4"/><ellipse cx="1727.8" cy="232.1" rx="30.6" ry="26" fill="none" stroke="#3399ee" stroke-width="2.2" stroke-dasharray="6,4"/></g><g clip-path="url(#cp2)"><line x1="157.5" y1="639" x2="157.5" y2="947" stroke="#c8c8c8" stroke-width="1"/><path d="M12 693h9M22 693h9M32 693h9M42 693h9M52 693h9M112 693h9M122 693h9M132 693h9M142 693h9M152 693h9M322 693h9M682 693h9M692 693h9M762 693h9M772 693h9M782 693h9M792 693h9M802 693h9M812 693h9M822 693h9M832 693h9M842 693h9M852 693h9M862 693h9M962 693h9M972 693h9M982 693h9M992 693h9M1002 693h9M1012 693h9M1022 693h9M1032 693h9M1512 693h9M1522 693h9M1532 693h9M1542 693h9M1552 693h9M1562 693h9M1572 693h9M1592 693h9M1602 693h9M1612 693h9M1622 693h9M1632 693h9" stroke="#32cd32" stroke-width="2"/><path d="M62 693h9M92 693h9M102 693h9M192 693h9M202 693h9M212 693h9M222 693h9M232 693h9M242 693h9M302 693h9M312 693h9M332 693h9M362 693h9M372 693h9M402 693h9M432 693h9M442 693h9M492 693h9M502 693h9M512 693h9M522 693h9M532 693h9M542 693h9M552 693h9M562 693h9M572 693h9M582 693h9M592 693h9M602 693h9M612 693h9M662 693h9M672 693h9M702 693h9M712 693h9M722 693h9M732 693h9M742 693h9M752 693h9M872 693h9M882 693h9M892 693h9M902 693h9M912 693h9M922 693h9M932 693h9M942 693h9M952 693h9M1042 693h9M1052 693h9M1062 693h9M1182 693h9M1192 693h9M1202 693h9M1212 693h9M1222 693h9M1232 693h9M1282 693h9M1292 693h9M1302 693h9M1312 693h9M1322 693h9M1332 693h9M1342 693h9M1352 693h9M1472 693h9M1502 693h9M1582 693h9M1642 693h9M1672 693h9M1682 693h9M1692 693h9M1702 693h9" stroke="#ffff00" stroke-width="2"/><path d="M72 693h9M82 693h9M162 693h9M172 693h9M182 693h9M252 693h9M262 693h9M272 693h9M282 693h9M292 693h9M342 693h9M352 693h9M382 693h9M392 693h9M412 693h9M422 693h9M452 693h9M462 693h9M472 693h9M482 693h9M622 693h9M632 693h9M642 693h9M652 693h9M1072 693h9M1082 693h9M1092 693h9M1102 693h9M1112 693h9M1122 693h9M1132 693h9M1142 693h9M1152 693h9M1162 693h9M1172 693h9M1242 693h9M1252 693h9M1262 693h9M1272 693h9M1362 693h9M1372 693h9M1382 693h9M1392 693h9M1402 693h9M1412 693h9M1422 693h9M1432 693h9M1442 693h9M1452 693h9M1462 693h9M1482 693h9M1492 693h9M1652 693h9M1662 693h9M1712 693h9" stroke="#ff0000" stroke-width="2"/><path d="M12 744h9M22 744h9M32 744h9M42 744h9M52 744h9M62 744h9M72 744h9M162 744h9M172 744h9M182 744h9M192 744h9M202 744h9M212 744h9M222 744h9M232 744h9M302 744h9M312 744h9M322 744h9M342 744h9M352 744h9M362 744h9M372 744h9M382 744h9M432 744h9M442 744h9M662 744h9M672 744h9M682 744h9M692 744h9M702 744h9M712 744h9M722 744h9M732 744h9M742 744h9M752 744h9M762 744h9M772 744h9M782 744h9M792 744h9M802 744h9M812 744h9M822 744h9M832 744h9M842 744h9M852 744h9M862 744h9M872 744h9M882 744h9M892 744h9M902 744h9M912 744h9M922 744h9M932 744h9M942 744h9M952 744h9M962 744h9M972 744h9M982 744h9M992 744h9M1002 744h9M1012 744h9M1022 744h9M1032 744h9M1042 744h9M1052 744h9M1062 744h9M1072 744h9M1082 744h9M1092 744h9M1292 744h9M1302 744h9M1312 744h9M1322 744h9M1332 744h9M1342 744h9M1462 744h9M1472 744h9" stroke="#00ffff" stroke-width="2"/><path d="M82 744h9M332 744h9M462 744h9M1282 744h9" stroke="#90ee90" stroke-width="2"/><path d="M92 744h9M272 744h9M292 744h9M402 744h9M1182 744h9M1192 744h9M1202 744h9M1402 744h9M1422 744h9M1452 744h9M1642 744h9" stroke="#ffa500" stroke-width="2"/><path d="M102 744h9M112 744h9M122 744h9M132 744h9M142 744h9M152 744h9M482 744h9M492 744h9M502 744h9M512 744h9M522 744h9M532 744h9M542 744h9M552 744h9M562 744h9M572 744h9M582 744h9M592 744h9M602 744h9M612 744h9M622 744h9M632 744h9M1212 744h9M1502 744h9M1512 744h9M1522 744h9M1532 744h9M1542 744h9M1552 744h9M1562 744h9M1572 744h9M1582 744h9M1592 744h9M1602 744h9M1612 744h9M1622 744h9M1632 744h9M1652 744h9M1662 744h9M1672 744h9M1682 744h9M1692 744h9M1702 744h9" stroke="#8b0000" stroke-width="2"/><path d="M242 744h9M422 744h9M472 744h9M1102 744h9M1112 744h9M1132 744h9M1142 744h9M1152 744h9M1162 744h9M1352 744h9M1372 744h9" stroke="#006400" stroke-width="2"/><path d="M252 744h9M282 744h9M412 744h9M452 744h9M642 744h9M652 744h9M1242 744h9M1252 744h9M1262 744h9M1272 744h9M1392 744h9M1412 744h9M1432 744h9M1442 744h9M1482 744h9M1712 744h9" stroke="#ffff00" stroke-width="2"/><path d="M262 744h9M392 744h9M1122 744h9M1172 744h9M1362 744h9M1382 744h9" stroke="#00e000" stroke-width="2"/><path d="M1222 744h9M1232 744h9M1492 744h9" stroke="#ff4500" stroke-width="2"/><path d="M12 845h9M22 845h9M32 845h9M42 845h9M52 845h9M62 845h9M72 845h9M162 845h9M172 845h9M182 845h9M192 845h9M202 845h9M212 845h9M222 845h9M232 845h9M302 845h9M312 845h9M322 845h9M342 845h9M352 845h9M362 845h9M372 845h9M382 845h9M432 845h9M442 845h9M662 845h9M672 845h9M682 845h9M692 845h9M702 845h9M712 845h9M722 845h9M732 845h9M742 845h9M752 845h9M762 845h9M772 845h9M782 845h9M792 845h9M802 845h9M812 845h9M822 845h9M832 845h9M842 845h9M852 845h9M862 845h9M872 845h9M882 845h9M892 845h9M902 845h9M912 845h9M922 845h9M932 845h9M942 845h9M952 845h9M962 845h9M972 845h9M982 845h9M992 845h9M1002 845h9M1012 845h9M1022 845h9M1032 845h9M1042 845h9M1052 845h9M1062 845h9M1072 845h9M1082 845h9M1092 845h9M1292 845h9M1302 845h9M1312 845h9M1322 845h9M1332 845h9M1342 845h9M1462 845h9M1472 845h9" stroke="#00ffff" stroke-width="2"/><path d="M82 845h9M332 845h9M462 845h9M1282 845h9" stroke="#90ee90" stroke-width="2"/><path d="M92 845h9M272 845h9M292 845h9M402 845h9M1182 845h9M1192 845h9M1202 845h9M1402 845h9M1422 845h9M1452 845h9M1642 845h9" stroke="#ffa500" stroke-width="2"/><path d="M102 845h9M112 845h9M122 845h9M132 845h9M142 845h9M152 845h9M482 845h9M492 845h9M502 845h9M512 845h9M522 845h9M532 845h9M542 845h9M552 845h9M562 845h9M572 845h9M582 845h9M592 845h9M602 845h9M612 845h9M622 845h9M632 845h9M1212 845h9M1502 845h9M1512 845h9M1522 845h9M1532 845h9M1542 845h9M1552 845h9M1562 845h9M1572 845h9M1582 845h9M1592 845h9M1602 845h9M1612 845h9M1622 845h9M1632 845h9M1652 845h9M1662 845h9M1672 845h9M1682 845h9M1692 845h9M1702 845h9" stroke="#8b0000" stroke-width="2"/><path d="M242 845h9M422 845h9M472 845h9M1102 845h9M1112 845h9M1132 845h9M1142 845h9M1152 845h9M1162 845h9M1352 845h9M1372 845h9" stroke="#006400" stroke-width="2"/><path d="M252 845h9M282 845h9M412 845h9M452 845h9M642 845h9M652 845h9M1242 845h9M1252 845h9M1262 845h9M1272 845h9M1392 845h9M1412 845h9M1432 845h9M1442 845h9M1482 845h9M1712 845h9" stroke="#ffff00" stroke-width="2"/><path d="M262 845h9M392 845h9M1122 845h9M1172 845h9M1362 845h9M1382 845h9" stroke="#00e000" stroke-width="2"/><path d="M1222 845h9M1232 845h9M1492 845h9" stroke="#ff4500" stroke-width="2"/><path d="M12 895h9M22 895h9M32 895h9M42 895h9M52 895h9M112 895h9M122 895h9M132 895h9M142 895h9M152 895h9M322 895h9M682 895h9M692 895h9M762 895h9M772 895h9M782 895h9M792 895h9M802 895h9M812 895h9M822 895h9M832 895h9M842 895h9M852 895h9M862 895h9M962 895h9M972 895h9M982 895h9M992 895h9M1002 895h9M1012 895h9M1022 895h9M1032 895h9M1512 895h9M1522 895h9M1532 895h9M1542 895h9M1552 895h9M1562 895h9M1572 895h9M1592 895h9M1602 895h9M1612 895h9M1622 895h9M1632 895h9" stroke="#32cd32" stroke-width="2"/><path d="M62 895h9M92 895h9M102 895h9M192 895h9M202 895h9M212 895h9M222 895h9M232 895h9M242 895h9M302 895h9M312 895h9M332 895h9M362 895h9M372 895h9M402 895h9M432 895h9M442 895h9M492 895h9M502 895h9M512 895h9M522 895h9M532 895h9M542 895h9M552 895h9M562 895h9M572 895h9M582 895h9M592 895h9M602 895h9M612 895h9M662 895h9M672 895h9M702 895h9M712 895h9M722 895h9M732 895h9M742 895h9M752 895h9M872 895h9M882 895h9M892 895h9M902 895h9M912 895h9M922 895h9M932 895h9M942 895h9M952 895h9M1042 895h9M1052 895h9M1062 895h9M1182 895h9M1192 895h9M1202 895h9M1212 895h9M1222 895h9M1232 895h9M1282 895h9M1292 895h9M1302 895h9M1312 895h9M1322 895h9M1332 895h9M1342 895h9M1352 895h9M1472 895h9M1502 895h9M1582 895h9M1642 895h9M1672 895h9M1682 895h9M1692 895h9M1702 895h9" stroke="#ffff00" stroke-width="2"/><path d="M72 895h9M82 895h9M162 895h9M172 895h9M182 895h9M252 895h9M262 895h9M272 895h9M282 895h9M292 895h9M342 895h9M352 895h9M382 895h9M392 895h9M412 895h9M422 895h9M452 895h9M462 895h9M472 895h9M482 895h9M622 895h9M632 895h9M642 895h9M652 895h9M1072 895h9M1082 895h9M1092 895h9M1102 895h9M1112 895h9M1122 895h9M1132 895h9M1142 895h9M1152 895h9M1162 895h9M1172 895h9M1242 895h9M1252 895h9M1262 895h9M1272 895h9M1362 895h9M1372 895h9M1382 895h9M1392 895h9M1402 895h9M1412 895h9M1422 895h9M1432 895h9M1442 895h9M1452 895h9M1462 895h9M1482 895h9M1492 895h9M1652 895h9M1662 895h9M1712 895h9" stroke="#ff0000" stroke-width="2"/><path d="M16 795V753M26 795V762M46 795V758.2M56 795V784.2M216 795V757.1M226 795V761.1M236 795V753M246 795V782M256 795V797.8M306 795V791M316 795V749M326 795V733.3M346 795V778.6M356 795V754.8M366 795V726.5M376 795V715.1M386 795V776.3M396 795V791M426 795V784.2M436 795V734.4M446 795V777.5M636 795V791M686 795V709.4M696 795V747.7M706 795V752.7M716 795V748.5M726 795V760.1M736 795V753.4M746 795V761.3M756 795V741.5M766 795V705M776 795V713.1M786 795V714.4M796 795V717.3M806 795V723.8M816 795V744M826 795V752.7M836 795V761.3M866 795V745.2M876 795V746.5M886 795V763.8M896 795V756.4M906 795V745.2M916 795V741M926 795V742M936 795V730M946 795V721.3M956 795V725.5M966 795V697.1M976 795V708.9M986 795V696.6M996 795V719.3M1006 795V730.4M1016 795V742.8M1026 795V737.8M1036 795V765M1056 795V770M1336 795V751.4M1346 795V749.4M1356 795V763.8M1366 795V781.1M1376 795V773.7M1386 795V786" stroke="#0000ff" stroke-width="2"/><path d="M36.5 795V749.1M846.5 795V748.5M856.5 795V733.6M1046.5 795V766.7" stroke="#90ee90" stroke-width="4"/><path d="M66 795V811.4M76 795V846.6M86 795V859M96 795V870.4M166 795V766.1M176 795V763.4M186 795V764.3M196 795V760.5M266 795V799M276 795V829.6M286 795V821.6M406 795V826.9M416 795V820.5M456 795V835.2M466 795V809.2M476 795V787.6M486 795V861.3M496 795V868.1M506 795V852.2M516 795V839.8M646 795V734.1M656 795V728M666 795V686.7M1076 795V834.2M1086 795V821.8M1096 795V808.8M1286 795V757.6M1296 795V725.5M1306 795V705M1316 795V719.3M1396 795V830.5M1406 795V854M1416 795V862.6M1426 795V870M1466 795V740.3M1476 795V688.5M1486 795V741.5M1646 795V789M1656 795V730.9M1666 795V770.5M1716 795V765.8" stroke="#808080" stroke-width="2"/><path d="M106 795V885.1M206 795V754.3M296 795V852.2M526 795V850M676 795V685.2M1106 795V849M1326 795V739.1M1436 795V839.1" stroke="#ffff00" stroke-width="2"/><path d="M116 795V868.1M126 795V854M136 795V845.4M146 795V839.3M156 795V835.9M336 795V800.1M536 795V855.6M546 795V843.2M556 795V835.9M566 795V831.4M576 795V829.6M596 795V852.2M606 795V882.8M616 795V835.2M626 795V846.5M1066 795V794.7M1116 795V862.6M1126 795V864.6M1136 795V844.1M1146 795V823.1M1156 795V815.2M1166 795V820.6M1176 795V834.2M1186 795V897.2M1196 795V883.6M1206 795V875M1216 795V877.5M1226 795V861.4M1236 795V842.9M1246 795V823.1M1256 795V799.6M1266 795V793.4M1276 795V802.8M1446 795V830.5M1456 795V820.6M1496 795V843M1506 795V851M1516 795V922.8M1526 795V897M1536 795V868.5M1546 795V858.8M1556 795V872.9M1566 795V865.8M1576 795V824.7M1596 795V822.9M1606 795V840M1616 795V845.2M1626 795V848.3M1636 795V836M1686 795V833.8M1696 795V844M1706 795V819.9" stroke="#ff0000" stroke-width="2"/><path d="M586.5 795V857.9M1586.5 795V823.4M1676.5 795V824.5" stroke="#ffb6c1" stroke-width="4"/><g fill="#ff0000"><rect x="13" y="792" width="6" height="6"/><rect x="23" y="792" width="6" height="6"/><rect x="33" y="792" width="6" height="6"/><rect x="43" y="792" width="6" height="6"/><rect x="53" y="792" width="6" height="6"/><rect x="63" y="792" width="6" height="6"/><rect x="73" y="792" width="6" height="6"/><rect x="83" y="792" width="6" height="6"/><rect x="93" y="792" width="6" height="6"/><rect x="103" y="792" width="6" height="6"/><rect x="113" y="792" width="6" height="6"/><rect x="123" y="792" width="6" height="6"/><rect x="133" y="792" width="6" height="6"/><rect x="143" y="792" width="6" height="6"/><rect x="153" y="792" width="6" height="6"/><rect x="273" y="792" width="6" height="6"/><rect x="283" y="792" width="6" height="6"/><rect x="293" y="792" width="6" height="6"/><rect x="333" y="792" width="6" height="6"/><rect x="343" y="792" width="6" height="6"/><rect x="353" y="792" width="6" height="6"/><rect x="383" y="792" width="6" height="6"/><rect x="393" y="792" width="6" height="6"/><rect x="403" y="792" width="6" height="6"/><rect x="413" y="792" width="6" height="6"/><rect x="453" y="792" width="6" height="6"/><rect x="463" y="792" width="6" height="6"/><rect x="473" y="792" width="6" height="6"/><rect x="483" y="792" width="6" height="6"/><rect x="493" y="792" width="6" height="6"/><rect x="503" y="792" width="6" height="6"/><rect x="513" y="792" width="6" height="6"/><rect x="523" y="792" width="6" height="6"/><rect x="533" y="792" width="6" height="6"/><rect x="543" y="792" width="6" height="6"/><rect x="553" y="792" width="6" height="6"/><rect x="563" y="792" width="6" height="6"/><rect x="583" y="792" width="6" height="6"/><rect x="593" y="792" width="6" height="6"/><rect x="603" y="792" width="6" height="6"/><rect x="823" y="792" width="6" height="6"/><rect x="833" y="792" width="6" height="6"/><rect x="843" y="792" width="6" height="6"/><rect x="863" y="792" width="6" height="6"/><rect x="873" y="792" width="6" height="6"/><rect x="883" y="792" width="6" height="6"/><rect x="893" y="792" width="6" height="6"/><rect x="903" y="792" width="6" height="6"/><rect x="913" y="792" width="6" height="6"/><rect x="923" y="792" width="6" height="6"/><rect x="933" y="792" width="6" height="6"/><rect x="943" y="792" width="6" height="6"/><rect x="953" y="792" width="6" height="6"/><rect x="1033" y="792" width="6" height="6"/><rect x="1043" y="792" width="6" height="6"/><rect x="1053" y="792" width="6" height="6"/><rect x="1063" y="792" width="6" height="6"/><rect x="1073" y="792" width="6" height="6"/><rect x="1083" y="792" width="6" height="6"/><rect x="1093" y="792" width="6" height="6"/><rect x="1103" y="792" width="6" height="6"/><rect x="1113" y="792" width="6" height="6"/><rect x="1123" y="792" width="6" height="6"/><rect x="1133" y="792" width="6" height="6"/><rect x="1143" y="792" width="6" height="6"/><rect x="1153" y="792" width="6" height="6"/><rect x="1163" y="792" width="6" height="6"/><rect x="1173" y="792" width="6" height="6"/><rect x="1183" y="792" width="6" height="6"/><rect x="1193" y="792" width="6" height="6"/><rect x="1203" y="792" width="6" height="6"/><rect x="1213" y="792" width="6" height="6"/><rect x="1223" y="792" width="6" height="6"/><rect x="1233" y="792" width="6" height="6"/><rect x="1363" y="792" width="6" height="6"/><rect x="1383" y="792" width="6" height="6"/><rect x="1393" y="792" width="6" height="6"/><rect x="1403" y="792" width="6" height="6"/><rect x="1413" y="792" width="6" height="6"/><rect x="1423" y="792" width="6" height="6"/><rect x="1433" y="792" width="6" height="6"/><rect x="1443" y="792" width="6" height="6"/><rect x="1453" y="792" width="6" height="6"/><rect x="1483" y="792" width="6" height="6"/><rect x="1493" y="792" width="6" height="6"/><rect x="1503" y="792" width="6" height="6"/><rect x="1513" y="792" width="6" height="6"/><rect x="1523" y="792" width="6" height="6"/><rect x="1533" y="792" width="6" height="6"/><rect x="1543" y="792" width="6" height="6"/><rect x="1553" y="792" width="6" height="6"/><rect x="1563" y="792" width="6" height="6"/><rect x="1573" y="792" width="6" height="6"/><rect x="1593" y="792" width="6" height="6"/><rect x="1603" y="792" width="6" height="6"/><rect x="1623" y="792" width="6" height="6"/></g><g fill="#008000"><rect x="163" y="792" width="6" height="6"/><rect x="173" y="792" width="6" height="6"/><rect x="183" y="792" width="6" height="6"/><rect x="193" y="792" width="6" height="6"/><rect x="203" y="792" width="6" height="6"/><rect x="213" y="792" width="6" height="6"/><rect x="223" y="792" width="6" height="6"/><rect x="233" y="792" width="6" height="6"/><rect x="243" y="792" width="6" height="6"/><rect x="253" y="792" width="6" height="6"/><rect x="263" y="792" width="6" height="6"/><rect x="303" y="792" width="6" height="6"/><rect x="313" y="792" width="6" height="6"/><rect x="323" y="792" width="6" height="6"/><rect x="363" y="792" width="6" height="6"/><rect x="373" y="792" width="6" height="6"/><rect x="423" y="792" width="6" height="6"/><rect x="433" y="792" width="6" height="6"/><rect x="443" y="792" width="6" height="6"/><rect x="573" y="792" width="6" height="6"/><rect x="613" y="792" width="6" height="6"/><rect x="623" y="792" width="6" height="6"/><rect x="633" y="792" width="6" height="6"/><rect x="643" y="792" width="6" height="6"/><rect x="653" y="792" width="6" height="6"/><rect x="663" y="792" width="6" height="6"/><rect x="673" y="792" width="6" height="6"/><rect x="683" y="792" width="6" height="6"/><rect x="693" y="792" width="6" height="6"/><rect x="703" y="792" width="6" height="6"/><rect x="713" y="792" width="6" height="6"/><rect x="723" y="792" width="6" height="6"/><rect x="733" y="792" width="6" height="6"/><rect x="743" y="792" width="6" height="6"/><rect x="753" y="792" width="6" height="6"/><rect x="763" y="792" width="6" height="6"/><rect x="773" y="792" width="6" height="6"/><rect x="783" y="792" width="6" height="6"/><rect x="793" y="792" width="6" height="6"/><rect x="803" y="792" width="6" height="6"/><rect x="813" y="792" width="6" height="6"/><rect x="853" y="792" width="6" height="6"/><rect x="963" y="792" width="6" height="6"/><rect x="973" y="792" width="6" height="6"/><rect x="983" y="792" width="6" height="6"/><rect x="993" y="792" width="6" height="6"/><rect x="1003" y="792" width="6" height="6"/><rect x="1013" y="792" width="6" height="6"/><rect x="1023" y="792" width="6" height="6"/><rect x="1243" y="792" width="6" height="6"/><rect x="1253" y="792" width="6" height="6"/><rect x="1263" y="792" width="6" height="6"/><rect x="1273" y="792" width="6" height="6"/><rect x="1283" y="792" width="6" height="6"/><rect x="1293" y="792" width="6" height="6"/><rect x="1303" y="792" width="6" height="6"/><rect x="1313" y="792" width="6" height="6"/><rect x="1323" y="792" width="6" height="6"/><rect x="1333" y="792" width="6" height="6"/><rect x="1343" y="792" width="6" height="6"/><rect x="1353" y="792" width="6" height="6"/><rect x="1373" y="792" width="6" height="6"/><rect x="1463" y="792" width="6" height="6"/><rect x="1473" y="792" width="6" height="6"/><rect x="1583" y="792" width="6" height="6"/><rect x="1613" y="792" width="6" height="6"/><rect x="1633" y="792" width="6" height="6"/><rect x="1643" y="792" width="6" height="6"/><rect x="1653" y="792" width="6" height="6"/><rect x="1663" y="792" width="6" height="6"/><rect x="1673" y="792" width="6" height="6"/><rect x="1683" y="792" width="6" height="6"/><rect x="1693" y="792" width="6" height="6"/><rect x="1703" y="792" width="6" height="6"/><rect x="1713" y="792" width="6" height="6"/></g><path d="M14 795.5h4M24 795.5h4M34 795.5h4M44 795.5h4M54 795.5h4M64 795.5h4M74 795.5h4M84 795.5h4M94 795.5h4M104 795.5h4M114 795.5h4M124 795.5h4M134 795.5h4M144 795.5h4M154 795.5h4M164 795.5h4M174 795.5h4M184 795.5h4M194 795.5h4M204 795.5h4M214 795.5h4M224 795.5h4M234 795.5h4M244 795.5h4M254 795.5h4M264 795.5h4M274 795.5h4M284 795.5h4M294 795.5h4M304 795.5h4M314 795.5h4M324 795.5h4M334 795.5h4M344 795.5h4M354 795.5h4M364 795.5h4M374 795.5h4M384 795.5h4M394 795.5h4M404 795.5h4M414 795.5h4M424 795.5h4M434 795.5h4M444 795.5h4M454 795.5h4M464 795.5h4M474 795.5h4M484 795.5h4M494 795.5h4M504 795.5h4M514 795.5h4M524 795.5h4M534 795.5h4M544 795.5h4M554 795.5h4M564 795.5h4M574 795.5h4M584 795.5h4M594 795.5h4M604 795.5h4M614 795.5h4M624 795.5h4M634 795.5h4M644 795.5h4M654 795.5h4M664 795.5h4M674 795.5h4M684 795.5h4M694 795.5h4M704 795.5h4M714 795.5h4M724 795.5h4M734 795.5h4M744 795.5h4M754 795.5h4M764 795.5h4M774 795.5h4M784 795.5h4M794 795.5h4M804 795.5h4M814 795.5h4M824 795.5h4M834 795.5h4M844 795.5h4M854 795.5h4M864 795.5h4M874 795.5h4M884 795.5h4M894 795.5h4M904 795.5h4M914 795.5h4M924 795.5h4M934 795.5h4M944 795.5h4M954 795.5h4M964 795.5h4M974 795.5h4M984 795.5h4M994 795.5h4M1004 795.5h4M1014 795.5h4M1024 795.5h4M1034 795.5h4M1044 795.5h4M1054 795.5h4M1064 795.5h4M1074 795.5h4M1084 795.5h4M1094 795.5h4M1104 795.5h4M1114 795.5h4M1124 795.5h4M1134 795.5h4M1144 795.5h4M1154 795.5h4M1164 795.5h4M1174 795.5h4M1184 795.5h4M1194 795.5h4M1204 795.5h4M1214 795.5h4M1224 795.5h4M1234 795.5h4M1244 795.5h4M1254 795.5h4M1264 795.5h4M1274 795.5h4M1284 795.5h4M1294 795.5h4M1304 795.5h4M1314 795.5h4M1324 795.5h4M1334 795.5h4M1344 795.5h4M1354 795.5h4M1364 795.5h4M1374 795.5h4M1384 795.5h4M1394 795.5h4M1404 795.5h4M1414 795.5h4M1424 795.5h4M1434 795.5h4M1444 795.5h4M1454 795.5h4M1464 795.5h4M1474 795.5h4M1484 795.5h4M1494 795.5h4M1504 795.5h4M1514 795.5h4M1524 795.5h4M1534 795.5h4M1544 795.5h4M1554 795.5h4M1564 795.5h4M1574 795.5h4M1584 795.5h4M1594 795.5h4M1604 795.5h4M1614 795.5h4M1624 795.5h4M1634 795.5h4M1644 795.5h4M1654 795.5h4M1664 795.5h4M1674 795.5h4M1684 795.5h4M1694 795.5h4M1704 795.5h4M1714 795.5h4M166.5 793v4M176.5 793v4M186.5 793v4M196.5 793v4M206.5 793v4M216.5 793v4M226.5 793v4M236.5 793v4M246.5 793v4M256.5 793v4M266.5 793v4M306.5 793v4M316.5 793v4M326.5 793v4M366.5 793v4M376.5 793v4M426.5 793v4M436.5 793v4M446.5 793v4M576.5 793v4M616.5 793v4M626.5 793v4M636.5 793v4M646.5 793v4M656.5 793v4M666.5 793v4M676.5 793v4M686.5 793v4M696.5 793v4M706.5 793v4M716.5 793v4M726.5 793v4M736.5 793v4M746.5 793v4M756.5 793v4M766.5 793v4M776.5 793v4M786.5 793v4M796.5 793v4M806.5 793v4M816.5 793v4M856.5 793v4M966.5 793v4M976.5 793v4M986.5 793v4M996.5 793v4M1006.5 793v4M1016.5 793v4M1026.5 793v4M1246.5 793v4M1256.5 793v4M1266.5 793v4M1276.5 793v4M1286.5 793v4M1296.5 793v4M1306.5 793v4M1316.5 793v4M1326.5 793v4M1336.5 793v4M1346.5 793v4M1356.5 793v4M1376.5 793v4M1466.5 793v4M1476.5 793v4M1586.5 793v4M1616.5 793v4M1636.5 793v4M1646.5 793v4M1656.5 793v4M1666.5 793v4M1676.5 793v4M1686.5 793v4M1696.5 793v4M1706.5 793v4M1716.5 793v4" stroke="#ffffff" stroke-width="1"/><polyline points="16,753 26,762 36,749.1 46,758.2 56,784.2 66,811.4 76,846.6 86,859 96,870.4 106,885.1 116,868.1 126,854 136,845.4 146,839.3 156,835.9 166,766.1 176,763.4 186,764.3 196,760.5 206,754.3 216,757.1 226,761.1 236,753 246,782 256,797.8 266,799 276,829.6 286,821.6 296,852.2 306,791 316,749 326,733.3 336,800.1 346,778.6 356,754.8 366,726.5 376,715.1 386,776.3 396,791 406,826.9 416,820.5 426,784.2 436,734.4 446,777.5 456,835.2 466,809.2 476,787.6 486,861.3 496,868.1 506,852.2 516,839.8 526,850 536,855.6 546,843.2 556,835.9 566,831.4 576,829.6 586,857.9 596,852.2 606,882.8 616,835.2 626,846.5 636,791 646,734.1 656,728 666,686.7 676,685.2 686,709.4 696,747.7 706,752.7 716,748.5 726,760.1 736,753.4 746,761.3 756,741.5 766,705 776,713.1 786,714.4 796,717.3 806,723.8 816,744 826,752.7 836,761.3 846,748.5 856,733.6 866,745.2 876,746.5 886,763.8 896,756.4 906,745.2 916,741 926,742 936,730 946,721.3 956,725.5 966,697.1 976,708.9 986,696.6 996,719.3 1006,730.4 1016,742.8 1026,737.8 1036,765 1046,766.7 1056,770 1066,794.7 1076,834.2 1086,821.8 1096,808.8 1106,849 1116,862.6 1126,864.6 1136,844.1 1146,823.1 1156,815.2 1166,820.6 1176,834.2 1186,897.2 1196,883.6 1206,875 1216,877.5 1226,861.4 1236,842.9 1246,823.1 1256,799.6 1266,793.4 1276,802.8 1286,757.6 1296,725.5 1306,705 1316,719.3 1326,739.1 1336,751.4 1346,749.4 1356,763.8 1366,781.1 1376,773.7 1386,786 1396,830.5 1406,854 1416,862.6 1426,870 1436,839.1 1446,830.5 1456,820.6 1466,740.3 1476,688.5 1486,741.5 1496,843 1506,851 1516,922.8 1526,897 1536,868.5 1546,858.8 1556,872.9 1566,865.8 1576,824.7 1586,823.4 1596,822.9 1606,840 1616,845.2 1626,848.3 1636,836 1646,789 1656,730.9 1666,770.5 1676,824.5 1686,833.8 1696,844 1706,819.9 1716,765.8" fill="none" stroke="#ffa500" stroke-width="2.2" stroke-linejoin="miter"/><polyline points="16,714.4 26,720.8 36,712.2 46,718.5 56,732.6 66,743.5 76,757.1 86,768.4 96,779.3 106,799 116,800.1 126,801.2 136,802.4 146,803.5 156,805.1 166,752.1 176,755.2 186,759.8 196,762 206,761.1 216,762.7 226,764.3 236,755.5 246,776.3 256,785.4 266,784.2 276,797.8 286,790.6 296,796.7 306,778.6 316,766 326,755.9 336,784.2 346,777.5 356,768.4 366,749.1 376,737.8 386,774 396,784.7 406,806.5 416,800.1 426,776.3 436,746.9 446,768.4 456,800.1 466,787.6 476,775.2 486,816 496,829.1 506,822.8 516,817.1 526,829.1 536,838.2 546,831.4 556,830 566,828.4 576,827.8 586,845.9 596,845 606,863.6 616,842.7 626,853.7 636,833 646,812 656,812 666,782.3 676,755.1 686,747 696,774.2 706,768.7 716,755.1 726,761.8 736,748.5 746,753.9 756,739.6 766,707.4 776,713.9 786,707.4 796,700 806,695.8 816,708.2 826,712.4 836,720.5 846,713.1 856,705.7 866,714.9 876,715.6 886,726.7 896,726.7 906,726.2 916,728 926,731.7 936,730.8 946,730.4 956,733.6 966,727.2 976,728.7 986,721.3 996,725.5 1006,727.2 1016,730.4 1026,727.2 1036,738.6 1046,739.6 1056,741.5 1066,749.4 1076,758.3 1086,755.1 1096,751.4 1106,760.1 1116,765 1126,770.7 1136,768.7 1146,765.8 1156,765 1166,768.7 1176,773.7 1186,791.5 1196,792.2 1206,797.1 1216,809.5 1226,813.2 1236,812.7 1246,808.3 1256,798.4 1266,798.4 1276,806.3 1286,788.5 1296,774.2 1306,761.3 1316,762.5 1326,766.7 1336,770.7 1346,763.3 1356,772.4 1366,785.5 1376,777.4 1386,784 1396,807.8 1406,819.3 1416,820.2 1426,829 1436,819.3 1446,819.3 1456,816.3 1466,769.3 1476,719.4 1486,764.1 1496,835 1506,847 1516,916.3 1526,916.3 1536,905.3 1546,909.6 1556,955 1566,955 1576,881.6 1586,879.5 1596,877.2 1606,897 1616,893.7 1626,890.3 1636,879.2 1646,848 1656,818.3 1666,838.4 1676,863.1 1686,863.7 1696,866.2 1706,851.4 1716,828.5" fill="none" stroke="#1ebcf0" stroke-width="2.2"/></g><path d="M1870.5 52V947M0 638.5H1870.5M1 947.5H1871" stroke="#f0f0f0" stroke-width="1" fill="none"/><text x="1878" y="74" font-size="11" fill="#f0f0f0">796,0</text><text x="1878" y="99" font-size="11" fill="#f0f0f0">795,5</text><text x="1878" y="124" font-size="11" fill="#f0f0f0">795,0</text><text x="1878" y="148" font-size="11" fill="#f0f0f0">794,5</text><text x="1878" y="173" font-size="11" fill="#f0f0f0">794,0</text><text x="1878" y="198" font-size="11" fill="#f0f0f0">793,5</text><text x="1878" y="223" font-size="11" fill="#f0f0f0">793,0</text><text x="1878" y="247" font-size="11" fill="#f0f0f0">792,5</text><text x="1878" y="272" font-size="11" fill="#f0f0f0">792,0</text><text x="1878" y="297" font-size="11" fill="#f0f0f0">791,5</text><text x="1878" y="322" font-size="11" fill="#f0f0f0">791,0</text><text x="1878" y="346" font-size="11" fill="#f0f0f0">790,5</text><text x="1878" y="371" font-size="11" fill="#f0f0f0">790,0</text><text x="1878" y="396" font-size="11" fill="#f0f0f0">789,5</text><text x="1878" y="421" font-size="11" fill="#f0f0f0">789,0</text><text x="1878" y="446" font-size="11" fill="#f0f0f0">788,5</text><text x="1878" y="470" font-size="11" fill="#f0f0f0">788,0</text><text x="1878" y="495" font-size="11" fill="#f0f0f0">787,5</text><text x="1878" y="520" font-size="11" fill="#f0f0f0">787,0</text><text x="1878" y="545" font-size="11" fill="#f0f0f0">786,5</text><text x="1878" y="569" font-size="11" fill="#f0f0f0">786,0</text><text x="1878" y="594" font-size="11" fill="#f0f0f0">785,5</text><text x="1878" y="619" font-size="11" fill="#f0f0f0">785,0</text><path d="M1871 70.5h6M1871 95.5h6M1871 120.5h6M1871 144.5h6M1871 169.5h6M1871 194.5h6M1871 219.5h6M1871 243.5h6M1871 268.5h6M1871 293.5h6M1871 318.5h6M1871 342.5h6M1871 367.5h6M1871 392.5h6M1871 417.5h6M1871 442.5h6M1871 466.5h6M1871 491.5h6M1871 516.5h6M1871 541.5h6M1871 565.5h6M1871 590.5h6M1871 615.5h6" stroke="#f0f0f0" stroke-width="1"/><path d="M1871 242.5 L1879 236.5 H1907.5 V249.5 H1879 Z" fill="#a0a0a0" stroke="#f0f0f0" stroke-width="1"/><text x="1879" y="247" font-size="11" fill="#101030">792,5</text><path d="M1871 259.5 L1879 253.5 H1907.5 V266.5 H1879 Z" fill="#a0a0a0" stroke="#f0f0f0" stroke-width="1"/><text x="1879" y="264" font-size="11" fill="#101030">792,1</text><path d="M1871 281.5 L1879 275.5 H1907.5 V288.5 H1879 Z" fill="#a0a0a0" stroke="#f0f0f0" stroke-width="1"/><text x="1879" y="286" font-size="11" fill="#101030">791,7</text><path d="M1875 236L1879 232.5H1907.5V236" stroke="#f0f0f0" fill="#a0a0a0"/><text x="1879" y="674" font-size="11" fill="#f0f0f0">250</text><text x="1879" y="699" font-size="11" fill="#f0f0f0">200</text><text x="1879" y="725" font-size="11" fill="#f0f0f0">150</text><text x="1879" y="750" font-size="11" fill="#f0f0f0">100</text><text x="1879" y="775" font-size="11" fill="#f0f0f0">50</text><text x="1879" y="800" font-size="11" fill="#f0f0f0">0</text><text x="1879" y="825" font-size="11" fill="#f0f0f0">-50</text><text x="1879" y="850" font-size="11" fill="#f0f0f0">-100</text><text x="1879" y="875" font-size="11" fill="#f0f0f0">-150</text><text x="1879" y="901" font-size="11" fill="#f0f0f0">-200</text><text x="1879" y="926" font-size="11" fill="#f0f0f0">-250</text><path d="M1871 670.5h6M1871 695.5h6M1871 721.5h6M1871 746.5h6M1871 771.5h6M1871 796.5h6M1871 821.5h6M1871 846.5h6M1871 871.5h6M1871 897.5h6M1871 922.5h6" stroke="#f0f0f0" stroke-width="1"/><path d="M1871 765.5 L1878 759.5 H1907.5 V772.5 H1878 Z" fill="#a0a0a0" stroke="#f0f0f0" stroke-width="1"/><text x="1880" y="770" font-size="11" fill="#202020">57,74</text><path d="M1871 827.5 L1878 821.5 H1910.5 V834.5 H1878 Z" fill="#a0a0a0" stroke="#f0f0f0" stroke-width="1"/><text x="1880" y="832" font-size="11" fill="#202020">-64,76</text><rect x="1907.5" y="646.5" width="11" height="12" fill="none" stroke="#f0f0f0"/><text x="1910" y="656.5" font-size="10" fill="#f0f0f0">F</text><text x="107.5" y="964" font-size="11" fill="#f0f0f0" text-anchor="middle">22:00</text><text x="227.5" y="964" font-size="11" fill="#f0f0f0" text-anchor="middle">1/11</text><text x="287.5" y="964" font-size="11" fill="#f0f0f0" text-anchor="middle">09:00</text><text x="382.5" y="964" font-size="11" fill="#f0f0f0" text-anchor="middle">09:30</text><text x="447.5" y="964" font-size="11" fill="#f0f0f0" text-anchor="middle">10:00</text><text x="527.5" y="964" font-size="11" fill="#f0f0f0" text-anchor="middle">10:30</text><text x="597.5" y="964" font-size="11" fill="#f0f0f0" text-anchor="middle">11:00</text><text x="682.5" y="964" font-size="11" fill="#f0f0f0" text-anchor="middle">11:30</text><text x="762.5" y="964" font-size="11" fill="#f0f0f0" text-anchor="middle">12:00</text><text x="857.5" y="964" font-size="11" fill="#f0f0f0" text-anchor="middle">12:30</text><text x="957.5" y="964" font-size="11" fill="#f0f0f0" text-anchor="middle">13:00</text><text x="1057.5" y="964" font-size="11" fill="#f0f0f0" text-anchor="middle">13:30</text><text x="1157.5" y="964" font-size="11" fill="#f0f0f0" text-anchor="middle">14:00</text><text x="1257.5" y="964" font-size="11" fill="#f0f0f0" text-anchor="middle">14:30</text><text x="1357.5" y="964" font-size="11" fill="#f0f0f0" text-anchor="middle">15:00</text><text x="1457.5" y="964" font-size="11" fill="#f0f0f0" text-anchor="middle">15:30</text><text x="1557.5" y="964" font-size="11" fill="#f0f0f0" text-anchor="middle">16:00</text><text x="1657.5" y="964" font-size="11" fill="#f0f0f0" text-anchor="middle">16:30</text><path d="M107.5 948v5M227.5 948v5M287.5 948v5M382.5 948v5M447.5 948v5M527.5 948v5M597.5 948v5M682.5 948v5M762.5 948v5M857.5 948v5M957.5 948v5M1057.5 948v5M1157.5 948v5M1257.5 948v5M1357.5 948v5M1457.5 948v5M1557.5 948v5M1657.5 948v5" stroke="#f0f0f0" stroke-width="1"/><text x="3" y="945" font-size="11" fill="#f0f0f0">© 2011 NinjaTrader, LLC</text><g clip-path="url(#cp1)"><text x="3" y="62.8" font-size="11" fill="#f0f0f0" textLength="315.8" lengthAdjust="spacingAndGlyphs">MASlopeBoxMulti(Typical of TF 03-11 (3 Min),3,EMA,WDS,16), </text><text x="318.8" y="62.8" font-size="11" fill="#f0f0f0" textLength="314.2" lengthAdjust="spacingAndGlyphs">MASlopeBoxMulti(Typical of TF 03-11 (3 Min),2,EMA,WDS,34), </text><text x="633" y="62.8" font-size="11" fill="#f0f0f0" textLength="135" lengthAdjust="spacingAndGlyphs">Swing(TF 03-11 (3 Min),5), </text><text x="768" y="62.8" font-size="11" fill="#f0f0f0" textLength="368" lengthAdjust="spacingAndGlyphs">EMA(Typical of TF 03-11 (3 Min),34), EMA(Typical of TF 03-11 (3 Min),16), </text><text x="1136" y="62.8" font-size="11" fill="#f0f0f0" textLength="169" lengthAdjust="spacingAndGlyphs">anaThrustBars(TF 03-11 (3 Min)), </text><text x="1305" y="62.8" font-size="11" fill="#f0f0f0" textLength="140" lengthAdjust="spacingAndGlyphs">BarTimer(TF 03-11 (3 Min)), </text><text x="1445" y="62.8" font-size="11" fill="#f0f0f0" textLength="190" lengthAdjust="spacingAndGlyphs">EMA(Typical of TF 03-11 (3 Min),170), </text><text x="1635" y="62.8" font-size="11" fill="#f0f0f0" textLength="233.8" lengthAdjust="spacingAndGlyphs">MASlopeBoxMulti(Typical of TF 03-11 (3 Min),1</text></g><path d="M1840 57.5L1856 67.5L1840 77.5Z" fill="#e8e8e8"/><rect x="1857" y="57" width="4" height="20.5" fill="#e8e8e8"/><text x="1526.5" y="362" font-size="19.3" fill="#ffffff" text-anchor="middle">toto by mohol byť pekný short po prerazení LOD a EMA 170 (červená),</text><text x="1526.5" y="383" font-size="19.3" fill="#ffffff" text-anchor="middle">či bude smerodajná EMA 16 alebo EMA 34 však ešte v tejto chvíli netuším</text><text x="1812" y="529" font-size="15.8" fill="#22c022">36°</text><text x="1812" y="569" font-size="15.8" fill="#22c022">7°</text><text x="1812" y="609" font-size="15.8" fill="#22c022">7°</text><text x="1334" y="627" font-size="11" fill="#f0f0f0" textLength="530" lengthAdjust="spacingAndGlyphs">Bar timer disabled since either you are disconnected or current time is outside session time or chart end date</text><text x="3" y="660" font-size="11" fill="#f0f0f0" textLength="782" lengthAdjust="spacingAndGlyphs">WoodiesCCI(14,50), CCI_Forecaster_V7_DE(Typical of TF 03-11 (3 Min),200,5,50,0,5,4,120,185,0,15,0,14,100,100,60,33,75,33,12,False,Points,10,10,185,185)</text><rect x="1" y="663" width="49" height="13" fill="#ff0000"/><text x="6" y="674" font-size="11.5" fill="#ffffff">21,5 Flat</text><rect x="33" y="667" width="9" height="26" fill="#ffffff"/><text x="37.5" y="678" font-size="11" fill="#006400" text-anchor="middle">Z</text><text x="37.5" y="690" font-size="11" fill="#006400" text-anchor="middle">e</text><rect x="583" y="695" width="9" height="26" fill="#ffffff"/><text x="587.5" y="706" font-size="11" fill="#ff0000" text-anchor="middle">Z</text><text x="587.5" y="718" font-size="11" fill="#ff0000" text-anchor="middle">t</text><rect x="843" y="667" width="9" height="26" fill="#ffffff"/><text x="847.5" y="678" font-size="11" fill="#006400" text-anchor="middle">Z</text><text x="847.5" y="690" font-size="11" fill="#006400" text-anchor="middle">t</text><rect x="853" y="667" width="9" height="26" fill="#ffffff"/><text x="857.5" y="678" font-size="11" fill="#006400" text-anchor="middle">Z</text><text x="857.5" y="690" font-size="11" fill="#006400" text-anchor="middle">b</text><rect x="1043" y="667" width="9" height="26" fill="#ffffff"/><text x="1047.5" y="678" font-size="11" fill="#006400" text-anchor="middle">Z</text><text x="1047.5" y="690" font-size="11" fill="#006400" text-anchor="middle">t</text><rect x="1283" y="667" width="9" height="26" fill="#ffffff"/><text x="1287.5" y="678" font-size="11" fill="#006400" text-anchor="middle">F</text><text x="1287.5" y="690" font-size="11" fill="#006400" text-anchor="middle">e</text><rect x="1384" y="696" width="9" height="26" fill="#ffffff"/><text x="1388.5" y="707" font-size="11" fill="#ff0000" text-anchor="middle">F</text><text x="1388.5" y="719" font-size="11" fill="#ff0000" text-anchor="middle">b</text><rect x="1582" y="695" width="9" height="26" fill="#ffffff"/><text x="1586.5" y="706" font-size="11" fill="#ff0000" text-anchor="middle">Z</text><text x="1586.5" y="718" font-size="11" fill="#ff0000" text-anchor="middle">t</text><rect x="1673" y="695" width="9" height="26" fill="#ffffff"/><text x="1677.5" y="706" font-size="11" fill="#ff0000" text-anchor="middle">Z</text><text x="1677.5" y="718" font-size="11" fill="#ff0000" text-anchor="middle">e</text><rect x="1843" y="667" width="9" height="26" fill="#ffffff"/><text x="1847.5" y="678" font-size="11" fill="#006400" text-anchor="middle">Z</text><text x="1847.5" y="690" font-size="11" fill="#006400" text-anchor="middle">b</text><text x="1732" y="674" font-size="11" fill="#0000ff">797,0+29</text><text x="1756" y="680" font-size="11" fill="#ffffff">SIDEWAYS MARKET</text><rect x="1843" y="667" width="9" height="26" fill="#ffffff"/><text x="1847.5" y="678" font-size="11" fill="#006400" text-anchor="middle">Z</text><text x="1847.5" y="690" font-size="11" fill="#006400" text-anchor="middle">b</text><text x="1732" y="699" font-size="11" fill="#ffff00">794,2</text><text x="1732" y="724" font-size="11" fill="#ffffff">R1+79</text><text x="1732" y="775" font-size="11" fill="#008000">794,2</text><text x="1802" y="775" font-size="11" fill="#008000">794,5</text><text x="1758" y="801" font-size="15.8" fill="#ffffff">794,1</text><text x="1732" y="825" font-size="11" fill="#ff0000">793,2</text><text x="1802" y="825" font-size="11" fill="#ff0000">793,8</text><text x="1732" y="850" font-size="11" fill="#0000ff">14</text><text x="1802" y="850" font-size="11" fill="#0000ff">51♦</text><text x="1732" y="876" font-size="11" fill="#ffffff">Pivot-51</text><text x="1732" y="901" font-size="11" fill="#008000">51</text><text x="1802" y="901" font-size="11" fill="#ff0000">2</text><text x="1732" y="926" font-size="11" fill="#ffffff">146,40</text><text x="1802" y="926" font-size="11" fill="#ffffff">149,31</text><g clip-path="url(#cp2)"><text x="1732" y="951" font-size="11" fill="#ff0000">798,8-53</text></g><rect x="1846" y="758" width="4" height="37" fill="#90ee90"/><g><rect x="2" y="5" width="13" height="12" fill="#e8eef4" stroke="#7d8a99" stroke-width="1"/><path d="M3 15L6 11L9 13L14 7" stroke="#1e5fd0" stroke-width="1.3" fill="none"/><path d="M3 12L6 8L9 10L14 6" stroke="#2aa02a" stroke-width="1.2" fill="none"/></g><text x="21" y="15" font-size="12" fill="#101010" textLength="151" lengthAdjust="spacingAndGlyphs">TF 03-11 (3 Min)  11. 1. 2011</text><rect x="1778.5" y="-2" width="30.5" height="19" rx="2" fill="#d8bedc" stroke="#22c8f0" stroke-width="1.2"/><text x="1794" y="13" font-size="11" fill="#101030" text-anchor="middle">L</text><defs><linearGradient id="bb" x1="0" y1="0" x2="0" y2="1"><stop offset="0" stop-color="#dce9f5"/><stop offset="0.45" stop-color="#c2d6ea"/><stop offset="0.5" stop-color="#9fb7d2"/><stop offset="1" stop-color="#b8cfe6"/></linearGradient><linearGradient id="cb" x1="0" y1="0" x2="0" y2="1"><stop offset="0" stop-color="#eaa79a"/><stop offset="0.45" stop-color="#d9826e"/><stop offset="0.5" stop-color="#c2402a"/><stop offset="1" stop-color="#dc7a5a"/></linearGradient></defs><path d="M1814.5 -1V13.5Q1814.5 17.5 1818.5 17.5H1869V-1Z" fill="url(#bb)" stroke="#4a5a6a" stroke-width="1"/><line x1="1842.5" y1="0" x2="1842.5" y2="17" stroke="#6a7a8a"/><path d="M1869 -1V17.5H1912.5Q1916.5 17.5 1916.5 13.5V-1Z" fill="url(#cb)" stroke="#5a2a20" stroke-width="1"/><rect x="1823.5" y="8.5" width="11" height="4" fill="#f4f4f4" stroke="#404a55" stroke-width="1"/><rect x="1852.5" y="4.5" width="8" height="8" fill="none" stroke="#f4f4f4" stroke-width="2.5"/><rect x="1852.5" y="4.5" width="8" height="8" fill="none" stroke="#404a55" stroke-width="0.8"/><rect x="1850" y="6.5" width="8" height="7.5" fill="#d0dde9" stroke="#404a55" stroke-width="0.8"/><rect x="1852" y="8.5" width="4" height="3.5" fill="none" stroke="#f4f4f4" stroke-width="1.5"/><path d="M1888 4L1898 12M1898 4L1888 12" stroke="#404040" stroke-width="4.2"/><path d="M1888 4L1898 12M1898 4L1888 12" stroke="#f4f4f4" stroke-width="2.6"/><g fill="#b0b0b0"><rect x="3" y="27" width="2" height="2"/><rect x="3" y="31" width="2" height="2"/><rect x="3" y="35" width="2" height="2"/><rect x="3" y="39" width="2" height="2"/></g><line x1="12.5" y1="27" x2="12.5" y2="42" stroke="#c0c0c0"/><line x1="133.5" y1="27" x2="133.5" y2="42" stroke="#c0c0c0"/><line x1="243.5" y1="27" x2="243.5" y2="42" stroke="#c0c0c0"/><line x1="301.5" y1="27" x2="301.5" y2="42" stroke="#c0c0c0"/><text x="20" y="38" font-size="12" fill="#101010" textLength="43.5" lengthAdjust="spacingAndGlyphs">TF 03-11</text><text x="84.5" y="38" font-size="12" fill="#101010" textLength="30" lengthAdjust="spacingAndGlyphs">3 Min</text><path d="M70.5 33h6l-3 3z" fill="#101010"/><path d="M120.5 33h6l-3 3z" fill="#101010"/><path d="M156 33h6l-3 3z" fill="#101010"/><path d="M185 33h6l-3 3z" fill="#101010"/><path d="M266 33h6l-3 3z" fill="#101010"/><rect x="140" y="27" width="2" height="15" fill="#202020"/><rect x="139.5" y="28.5" width="3" height="12" rx="1" fill="#50d030" stroke="#202020" stroke-width="1"/><rect x="145" y="27" width="2" height="15" fill="#202020"/><rect x="144.5" y="28.5" width="3" height="12" rx="1" fill="#50d030" stroke="#202020" stroke-width="1"/><rect x="150" y="27" width="2" height="15" fill="#202020"/><rect x="149.5" y="28.5" width="3" height="12" rx="1" fill="#e03030" stroke="#202020" stroke-width="1"/><path d="M169 40L170.5 35.5L179.5 27L182 29.5L173 38Z" fill="#f0d020" stroke="#806010" stroke-width="0.8"/><path d="M179.5 27L182 29.5L183 28.5L180.5 26Z" fill="#e06060"/><circle cx="207" cy="34" r="4.5" fill="#a8cce8" stroke="#909090" stroke-width="1.5"/><path d="M203.5 37.5L198.5 41.5" stroke="#404040" stroke-width="2"/><path d="M210 28h5M212.5 25.5v5" stroke="#20b020" stroke-width="1.8"/><circle cx="231" cy="34" r="4.5" fill="#d0d0d0" stroke="#c0c0c0" stroke-width="1.5"/><path d="M227.5 37.5L222.5 41.5" stroke="#b0b0b0" stroke-width="2"/><path d="M233 29h5" stroke="#c0c0c0" stroke-width="1.5"/><path d="M249 34h5M258 34h5M256 27v5M256 36v5" stroke="#101010" stroke-width="1.6"/><rect x="278.5" y="26.5" width="14" height="15" fill="#f6f6f6" stroke="#707070"/><circle cx="286" cy="34" r="4" fill="#a8cce8" stroke="#909090" stroke-width="1.3"/><path d="M283 37L279.5 40" stroke="#404040" stroke-width="1.8"/><path d="M307 27h5l2 1.5l-2 1.5h-5z" fill="#40e020" stroke="#30a010" stroke-width="0.6"/><path d="M307 34.5h5l2 1.5l-2 1.5h-5z" fill="#f02020" stroke="#b01010" stroke-width="0.6"/><rect x="316.5" y="28.5" width="2.5" height="13" fill="#60d030"/><rect x="320" y="36" width="2.5" height="5.5" fill="#e03030"/><path d="M312 29.5h11M309 32.5h14M312 39.5h11" stroke="#d0d0d0" stroke-width="0.8"/><rect x="330.5" y="26.5" width="15" height="15" fill="#f4f4f4" stroke="#606060"/><rect x="333" y="29.5" width="2.5" height="9" fill="#50d030" stroke="#202020" stroke-width="0.6"/><rect x="337.5" y="28" width="2.5" height="8" fill="#50d030" stroke="#202020" stroke-width="0.6"/><rect x="342" y="30" width="2.5" height="9" fill="#e03030" stroke="#202020" stroke-width="0.6"/><rect x="353.5" y="26.5" width="15" height="15" fill="#e8e8e8" stroke="#606060"/><path d="M355 32L358 29.5L361 31L364 28.5L367 31" stroke="#30b050" fill="none" stroke-width="0.9"/><path d="M355 36L358 34L361 35L364 33L367 35.5" stroke="#e03030" fill="none" stroke-width="0.9"/><path d="M378.5 27.5H387L389.5 30V41.5H378.5Z" fill="#f0f0f0" stroke="#c8c8c8"/><text x="384" y="39" font-size="10" font-weight="bold" fill="#c0c0c0" text-anchor="middle">$</text><rect x="400.5" y="26.5" width="13.5" height="15" fill="#f0f4fa" stroke="#707070"/><rect x="402" y="28.5" width="10" height="2.5" fill="#4a90d0"/><rect x="402" y="32" width="2" height="8" fill="#9050e0"/><path d="M405.5 33.5h6M405.5 36h6M405.5 38.5h6" stroke="#c8d0e0" stroke-width="0.8"/></svg></body></html>
